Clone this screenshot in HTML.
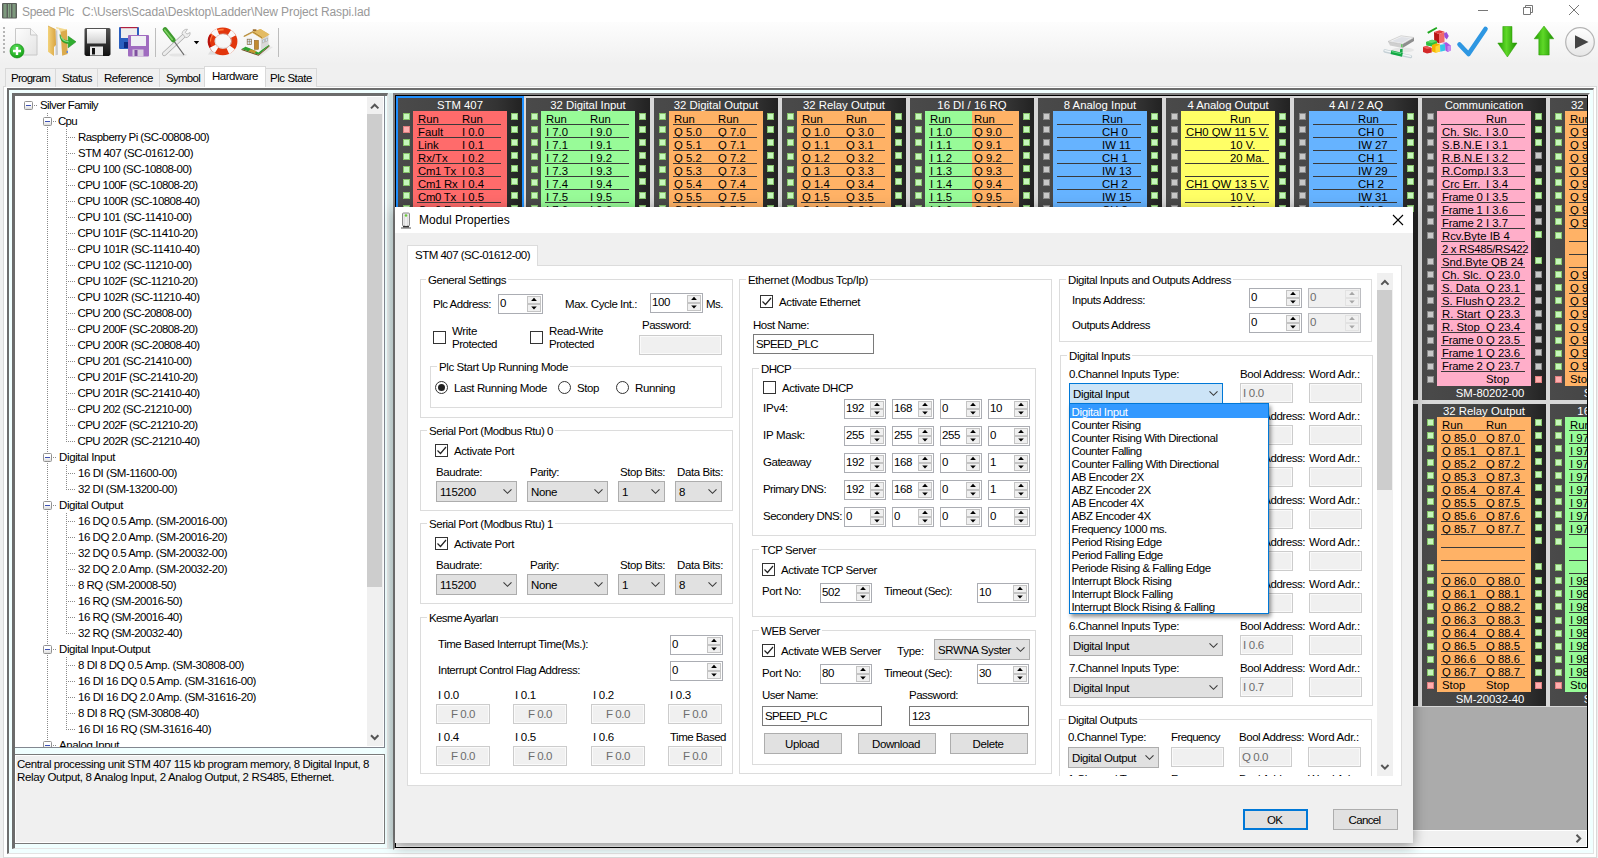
<!DOCTYPE html>
<html><head><meta charset="utf-8"><title>Speed Plc</title>
<style>
html,body{margin:0;padding:0;}
body{width:1598px;height:858px;overflow:hidden;background:#f0f0f0;position:relative;font-family:"Liberation Sans",sans-serif;font-size:11px;color:#000;}
div,span,svg{position:absolute;box-sizing:border-box;}
.t{white-space:pre;line-height:16px;height:16px;font-size:11.5px;letter-spacing:-0.4px;}
.m{white-space:pre;line-height:13px;height:13px;font-size:11.33px;letter-spacing:0px;margin-top:1px;}
.mh{white-space:pre;line-height:14px;height:14px;font-size:11.33px;color:#fff;text-align:center;}
.g{color:#6d6d6d;}
.gb{border:1px solid #dcdcdc;}
.gt{background:#fff;padding:0 2px;}
.sp{background:#fff;border:1px solid #7a7a7a;}
.tb{background:#fff;border:1px solid #7a7a7a;}
.tbd{background:#f0f0f0;border:1px solid #cccccc;box-shadow:inset 0 0 0 1px #fafafa;}
.cb{background:#fff;border:1px solid #333;}
.rb{background:#fff;border:1px solid #333;border-radius:50%;}
.co{background:#e1e1e1;border:1px solid #adadad;}
.bt{background:#e1e1e1;border:1px solid #adadad;text-align:center;}
.led{width:7px;height:7px;border:1px solid;}
.lg{background:#c6f7bc;border-color:#86c46a;}
.lx{background:#c8c8c8;border-color:#8a8a8a;}
.lr{background:#ffaeae;border-color:#e08080;}
.ul{height:1px;background:#3a3a3a;}
</style></head>
<body>
<div style="left:0px;top:0px;width:1598px;height:22px;background:#fff;"></div>
<svg style="left:1.5px;top:3px" width="15" height="15.5" viewBox="0 0 15 15" preserveAspectRatio="none"><rect x="0" y="0" width="15" height="15" rx="1" fill="#5a5f5a"/><rect x="1.6" y="1" width="2.8" height="13" fill="#8fae8f"/><rect x="6.1" y="1" width="2.8" height="13" fill="#8fae8f"/><rect x="10.6" y="1" width="2.8" height="13" fill="#8fae8f"/><rect x="2.6" y="1" width=".8" height="13" fill="#5f7a5f"/><rect x="7.1" y="1" width=".8" height="13" fill="#5f7a5f"/><rect x="11.6" y="1" width=".8" height="13" fill="#5f7a5f"/></svg>
<span class="t" style="left:22px;top:3px;font-size:12px;letter-spacing:-0.300px;color:#999;line-height:18px;height:18px;">Speed Plc</span>
<span class="t" style="left:82px;top:3px;font-size:12px;letter-spacing:-0.107px;color:#999;line-height:18px;height:18px;">C:\Users\Scada\Desktop\Ladder\New Project Raspi.lad</span>
<svg style="left:1470px;top:0" width="128" height="22" viewBox="0 0 128 22"><path d="M8 10.5h10" stroke="#777" stroke-width="1" fill="none"/><path d="M53.5 7.5h7v7h-7z M55.5 7.5v-2h7v7h-2" stroke="#777" stroke-width="1" fill="none"/><path d="M99 5l10 10M109 5l-10 10" stroke="#777" stroke-width="1" fill="none"/></svg>
<div style="left:0px;top:22px;width:1598px;height:42px;background:linear-gradient(#fdfdfd,#f0f0f0);"></div>
<svg style="left:3px;top:27px" width="3" height="26"><g fill="#b5b5b5"><rect x="0" y="0" width="2" height="2"/><rect x="0" y="4" width="2" height="2"/><rect x="0" y="8" width="2" height="2"/><rect x="0" y="12" width="2" height="2"/><rect x="0" y="16" width="2" height="2"/><rect x="0" y="20" width="2" height="2"/><rect x="0" y="24" width="2" height="2"/></g></svg>
<svg style="left:0;top:22px" width="1598" height="42" viewBox="0 22 1598 42">
<defs>
<linearGradient id="gpage" x1="0" y1="0" x2="1" y2="1"><stop offset="0" stop-color="#fdfdfd"/><stop offset="1" stop-color="#e4e4e4"/></linearGradient>
<radialGradient id="ggrn" cx=".4" cy=".3" r=".8"><stop offset="0" stop-color="#5fe05f"/><stop offset="1" stop-color="#0a9a0a"/></radialGradient>
<linearGradient id="gfold" x1="0" y1="0" x2="1" y2="0"><stop offset="0" stop-color="#f3d27a"/><stop offset="1" stop-color="#d9a441"/></linearGradient>
<linearGradient id="garr" x1="0" y1="0" x2="1" y2="0"><stop offset="0" stop-color="#1f9c00"/><stop offset=".45" stop-color="#5fd828"/><stop offset="1" stop-color="#1c9000"/></linearGradient>
<linearGradient id="gblk" x1="0" y1="0" x2="0" y2="1"><stop offset="0" stop-color="#555"/><stop offset="1" stop-color="#111"/></linearGradient>
<linearGradient id="glab" x1="0" y1="0" x2="0" y2="1"><stop offset="0" stop-color="#fff"/><stop offset="1" stop-color="#cfcfcf"/></linearGradient>
<linearGradient id="gplay" x1="0" y1="0" x2="0" y2="1"><stop offset="0" stop-color="#fff"/><stop offset="1" stop-color="#e6e6e6"/></linearGradient>
<linearGradient id="gdrv" x1="0" y1="0" x2="0" y2="1"><stop offset="0" stop-color="#f2f2f2"/><stop offset="1" stop-color="#a9a9a9"/></linearGradient>
</defs>
<path d="M15.5 28.5h15l6.5 6.5v20h-21.5z" fill="url(#gpage)" stroke="#c8c8c8"/><path d="M30.5 28.5v6.5h6.5" fill="#f4f4f4" stroke="#c8c8c8"/>
<circle cx="17" cy="51" r="7" fill="url(#ggrn)" stroke="#0b8a0b" stroke-width=".6"/><path d="M13 51h8M17 47v8" stroke="#fff" stroke-width="2.4"/>
<path d="M56 27l10.5 2.5v3l-8 1z" fill="#f3d98f"/>
<path d="M55.5 29l3-.6 2.5 4.6 1 21-7 1z" fill="#f4f4f4"/><path d="M55.5 30.5l1.8-.3.7 24.5-2.5.6z" fill="#c9c9c9"/>
<path d="M48 26l7.5 3.5.5 15.5-2 2v9l-6-4.2z" fill="url(#gfold)"/><path d="M48 26l7.5 3.5" stroke="#c9952e" stroke-width=".6" fill="none"/>
<path d="M60.5 31.5l6.5-2 .6 24.5-5.4 1.8z" fill="#dcab4c"/><path d="M60.5 31.5l6.5-2" stroke="#f3d98f" stroke-width=".7"/>
<rect x="66.6" y="50.8" width="1.2" height="2.2" fill="#3a7bff"/>
<path d="M60 34.5c1 4 4 6.2 8.2 6.3v-4.6l7.8 5.6-7.8 6v-4.3c-5.5 0-8.4-4-8.2-9z" fill="#2fae2f" stroke="#168016" stroke-width=".5"/><path d="M61 36.5c1.2 3 3.6 5 7.6 5.2" stroke="#8be28b" stroke-width="1.1" fill="none"/>
<path d="M84.5 29.5a1.5 1.5 0 0 1 1.5-1.5h23a1.5 1.5 0 0 1 1.5 1.5v25l-1.5 1.5h-23l-1.5-1.5z" fill="url(#gblk)"/><rect x="87" y="29" width="19" height="14.5" fill="url(#glab)"/><rect x="90" y="46.5" width="13" height="9" fill="#e9e9e9"/><rect x="92" y="48" width="3" height="6.5" fill="#111"/>
<rect x="119" y="27" width="20" height="22" rx="1" fill="#2a5fc0"/><rect x="121" y="28" width="16" height="10" fill="#eee"/><rect x="120.5" y="27" width="17" height="1.2" fill="#b02040"/><rect x="124" y="42" width="5" height="6" fill="#0c2a80"/>
<rect x="128" y="35" width="21" height="21.5" rx="1" fill="#a06cc0"/><rect x="131" y="36" width="15" height="10" fill="#f0f0f4"/><rect x="132.5" y="49.5" width="11" height="7" fill="#d9d0e0"/><rect x="134.5" y="50" width="3" height="6" fill="#8050a0"/>
<rect x="155" y="28" width="1" height="29" fill="#bdbdbd"/>
<ellipse cx="178" cy="55" rx="9" ry="1.6" fill="#e4e4e4"/>
<path d="M164.2 53.8l20-18.5" stroke="#a9a9a9" stroke-width="4.4" stroke-linecap="round"/><path d="M164.2 53.8l20-18.5" stroke="#ececec" stroke-width="3" stroke-linecap="round"/>
<path d="M182 33.5c.5-3 3-4.6 5.5-4.2l-2.2 3 1.6 1.8 3.2-1.6c.4 2.6-1.4 5-4.3 5.2z" fill="#efefef" stroke="#9c9c9c" stroke-width=".6"/>
<path d="M173.6 40.6l10.2 14" stroke="#6a6a6a" stroke-width="1.1" stroke-linecap="round"/>
<path d="M165 29.6l8.3 10.3" stroke="#3f9a2f" stroke-width="4.8" stroke-linecap="round"/><path d="M164.7 30l7.6 9.4" stroke="#7fd264" stroke-width="1.6" stroke-linecap="round"/>
<path d="M193.8 41h5.4l-2.7 3.2z" fill="#000"/>
<path d="M208 54.5l6-9 6 9.5z" fill="#dedede"/>
<ellipse cx="222.8" cy="41.4" rx="11.4" ry="10.6" fill="none" stroke="#e2360c" stroke-width="6.4"/>
<ellipse cx="222.8" cy="41.4" rx="12.6" ry="11.8" fill="none" stroke="#ff7a3c" stroke-width="1.6" stroke-dasharray="20 57" stroke-dashoffset="-38"/>
<path d="M210.6 35a13 12 0 0 0 4.5 16.5" stroke="#b8120c" stroke-width="2.2" fill="none"/>
<ellipse cx="222.8" cy="41.4" rx="11.4" ry="10.6" fill="none" stroke="#f8f8f8" stroke-width="6.6" stroke-dasharray="5.6 11.7" stroke-dashoffset="-6.4"/>
<ellipse cx="223.4" cy="41" rx="8.3" ry="7.2" fill="none" stroke="#c8c8c8" stroke-width=".6"/>
<path d="M258 55l12-8.5 3 .5-12 9z" fill="#e6e6e6"/>
<path d="M241.5 49l4.5-2.5 12.5 6 10-8 1 1-11 9.3z" fill="#2ea22e"/><path d="M241.5 49l17 5.8 11-9.3v.9l-11 9.4-17-5.9z" fill="#6b4a1a"/>
<path d="M246 36.5l6.5-4 8.3 5v12.6l-14.8-3.1z" fill="#f6f6f6"/>
<path d="M260.8 37.5l7.7-2.5v10.3l-7.7 4.8z" fill="#d9d9d9"/>
<path d="M243.7 36.3l8.8-4.6 8-2.7 9 5.5-7.5 4.2-9.5-5.8-8 4.2z" fill="#dcb055"/><path d="M252.5 32.8l8-3.8 9 5.5-7.5 4.2z" fill="#e3bb63"/><path d="M243.7 36.3l8.8-4.6 9.5 6" stroke="#9c7226" stroke-width=".8" fill="none"/>
<rect x="252.8" y="29.3" width="3.6" height="1.8" fill="#9a6a2a"/>
<rect x="254.3" y="40.3" width="4.2" height="9" fill="#c08a30" stroke="#8a5a1a" stroke-width=".5"/>
<rect x="247.2" y="39.2" width="4.4" height="5.2" fill="#d5e6f7" stroke="#8a6a3a" stroke-width=".7"/><path d="M249.4 39.2v5.2M247.2 41.6h4.4" stroke="#8a6a3a" stroke-width=".5"/>
<path d="M262.5 40l2-.8v3l-2 .9zM265.5 38.8l2-.8v3l-2 .9z" fill="#cfe2f5" stroke="#8a7a5a" stroke-width=".3"/>
<path d="M250.5 49.3l6 1.8-2 2.2-6-2z" fill="#c9962e"/>
<rect x="278" y="28" width="1" height="29" fill="#bdbdbd"/>
<ellipse cx="1403" cy="50" rx="11" ry="2.5" fill="#e6e6e6"/>
<path d="M1388 41.5l14.5 2.5v4l-12.5-2.5z" fill="#cfcfcf"/><path d="M1402.5 44l11.5-6.5v3.5l-11.5 7z" fill="#8e8e8e"/><path d="M1388 41.5l13-5.75 13 1.75-11.5 6.5z" fill="#f2f2f2" stroke="#b5b5b5" stroke-width=".5"/><path d="M1391.5 41.2l9.8-4.3 9.4 1.2-8.7 4.8z" fill="#dfe1e6"/>
<rect x="1401.4" y="44.2" width=".9" height="3" fill="#22c022"/>
<path d="M1385 51l25.5 5.6" stroke="#c5d0d5" stroke-width="3.4" stroke-linecap="round"/><path d="M1385 50.6l25.5 5.6" stroke="#f2f6f8" stroke-width="1.4" stroke-linecap="round"/>
<path d="M1391 52.2l11.4 2.6" stroke="#12a844" stroke-width="3.8"/><path d="M1400 49.2l2.6-.4v4l-2.6-.6z" fill="#12a844"/><path d="M1392 51.6l9 2" stroke="#6fe090" stroke-width=".9"/>
<path d="M1427.2 32l9.3-5 .8 1.5-9 5.2z" fill="#1fa81f"/>
<path d="M1434 32l5 2v9.5l-4.8-3z" fill="#b81414"/><path d="M1434 32l5.5-1.75 5 1.5-5.5 2.25z" fill="#e23a3a"/><path d="M1439 34l5.5-2.25v10.25l-5.5 1.5z" fill="#f06a6a"/>
<path d="M1444 33.5l2.5-1.5 2.25 4-2 3.5-2.25-2.5z" fill="#9a50d8"/>
<path d="M1426 42l6-2.25 5 1.25v3l-5 2.5-5.75-1z" fill="#2fbf3f"/><path d="M1426 42l6-2.25 5 1.25-5 2z" fill="#63dc6c"/>
<path d="M1423 47l3.5-1 5.25 2v4.5l-4.75 1-4-1.5z" fill="#d42828"/><path d="M1423 47l3.500-1 5.25 2-4.75 1z" fill="#ee5a5a"/>
<path d="M1432 45l4.5-1.75 3.5 1.25v7l-4.5 1.25-3.500-1.250z" fill="#f6b400"/><path d="M1435.500 46.500l4.5-2v7l-4.5 1.250z" fill="#ffd83a"/>
<path d="M1440 44.750l5-.75.500 6.500-5.250 1.250z" fill="#35c6e8"/>
<path d="M1442 43l4.500-.75 4.250 3.250v5l-3.250 1.500-2-1.500-.500-6.500z" fill="#a855e0"/><path d="M1447.500 46l3.250-.5v5l-3.250 1.500z" fill="#c98af0"/>
<path d="M1459.5 44.5l9 9.5 17-25" stroke="#2e97e2" stroke-width="4.6" fill="none" stroke-linecap="round" stroke-linejoin="round"/>
<path d="M1502.8 26.5h9.2v16.5h5l-9.6 14-9.6-14h5z" fill="url(#garr)" stroke="#2a9a00" stroke-width=".5"/>
<path d="M1544 26l9.8 12.8h-4.6v16.2h-10.4v-16.2h-4.6z" fill="url(#garr)" stroke="#2a9a00" stroke-width=".5"/>
<circle cx="1580" cy="42" r="14.3" fill="url(#gplay)" stroke="#b4b4b4" stroke-width="1.2"/><path d="M1575 35.3l13.5 6.7-13.5 6.7z" fill="#444"/>
</svg>
<div style="left:3px;top:86px;width:1594px;height:772px;background:#fff;border:1px solid #d9d9d9;"></div>
<div style="left:5px;top:68px;width:51px;height:19px;background:#f0f0f0;border:1px solid #d9d9d9;border-bottom:none;"></div>
<span class="t" style="left:11px;top:70px;letter-spacing:-0.730px;">Program</span>
<div style="left:55px;top:68px;width:43px;height:19px;background:#f0f0f0;border:1px solid #d9d9d9;border-bottom:none;"></div>
<span class="t" style="left:62px;top:70px;letter-spacing:-0.435px;">Status</span>
<div style="left:97px;top:68px;width:63px;height:19px;background:#f0f0f0;border:1px solid #d9d9d9;border-bottom:none;"></div>
<span class="t" style="left:104px;top:70px;letter-spacing:-0.451px;">Reference</span>
<div style="left:159px;top:68px;width:46px;height:19px;background:#f0f0f0;border:1px solid #d9d9d9;border-bottom:none;"></div>
<span class="t" style="left:166px;top:70px;letter-spacing:-0.727px;">Symbol</span>
<div style="left:204px;top:66px;width:62px;height:21px;background:#fff;border:1px solid #d9d9d9;border-bottom:none;"></div>
<span class="t" style="left:212px;top:68px;letter-spacing:-0.482px;">Hardware</span>
<div style="left:265px;top:68px;width:52px;height:19px;background:#f0f0f0;border:1px solid #d9d9d9;border-bottom:none;"></div>
<span class="t" style="left:270px;top:70px;letter-spacing:-0.448px;">Plc State</span>
<div style="left:7px;top:88px;width:1587px;height:766px;background:#f0ffff;border:2px solid #6e6e6e;border-right:1px solid #e3e3e3;border-bottom:1px solid #e3e3e3;"></div>
<div style="left:12px;top:93px;width:376px;height:756px;background:#f0ffff;border:3px solid #6c6c6c;border-right:1px solid #e6e6e6;border-bottom:1px solid #e6e6e6;"></div>
<div style="left:15px;top:96px;width:370px;height:652px;background:#fff;border-right:1px solid #828790;border-bottom:1px solid #828790;"></div>
<div style="left:15px;top:96px;width:352px;height:651px;overflow:hidden;">
<div style="left:32px;top:17px;height:641px;background:repeating-linear-gradient(180deg,#8a8a8a 0 1px,transparent 1px 2px);width:1px;"></div>
<div style="left:51px;top:33px;height:313px;background:repeating-linear-gradient(180deg,#8a8a8a 0 1px,transparent 1px 2px);width:1px;"></div>
<div style="left:51px;top:369px;height:25px;background:repeating-linear-gradient(180deg,#8a8a8a 0 1px,transparent 1px 2px);width:1px;"></div>
<div style="left:51px;top:417px;height:121px;background:repeating-linear-gradient(180deg,#8a8a8a 0 1px,transparent 1px 2px);width:1px;"></div>
<div style="left:51px;top:561px;height:73px;background:repeating-linear-gradient(180deg,#8a8a8a 0 1px,transparent 1px 2px);width:1px;"></div>
<span class="t" style="left:25px;top:1px;letter-spacing:-0.601px;">Silver Family</span>
<div style="left:9px;top:5px;width:9px;height:9px;border:1px solid #919191;background:linear-gradient(#fff 40%,#dcdcdc);border-radius:1.5px;"></div>
<div style="left:11px;top:9px;width:5px;height:1px;background:#3c50b4;"></div>
<div style="left:19px;top:9px;width:3px;background:repeating-linear-gradient(90deg,#8a8a8a 0 1px,transparent 1px 2px);height:1px;"></div>
<span class="t" style="left:43px;top:17px;letter-spacing:-0.703px;">Cpu</span>
<div style="left:28px;top:21px;width:9px;height:9px;border:1px solid #919191;background:linear-gradient(#fff 40%,#dcdcdc);border-radius:1.5px;"></div>
<div style="left:30px;top:25px;width:5px;height:1px;background:#3c50b4;"></div>
<div style="left:38px;top:25px;width:3px;background:repeating-linear-gradient(90deg,#8a8a8a 0 1px,transparent 1px 2px);height:1px;"></div>
<span class="t" style="left:63px;top:33px;letter-spacing:-0.567px;">Raspberry Pi (SC-00808-00)</span>
<div style="left:53px;top:41px;width:7px;background:repeating-linear-gradient(90deg,#8a8a8a 0 1px,transparent 1px 2px);height:1px;"></div>
<span class="t" style="left:63px;top:49px;letter-spacing:-0.520px;">STM 407 (SC-01612-00)</span>
<div style="left:53px;top:57px;width:7px;background:repeating-linear-gradient(90deg,#8a8a8a 0 1px,transparent 1px 2px);height:1px;"></div>
<span class="t" style="left:62.5px;top:65px;letter-spacing:-0.568px;">CPU 100 (SC-10808-00)</span>
<div style="left:53px;top:73px;width:7px;background:repeating-linear-gradient(90deg,#8a8a8a 0 1px,transparent 1px 2px);height:1px;"></div>
<span class="t" style="left:62.5px;top:81px;letter-spacing:-0.589px;">CPU 100F (SC-10808-20)</span>
<div style="left:53px;top:89px;width:7px;background:repeating-linear-gradient(90deg,#8a8a8a 0 1px,transparent 1px 2px);height:1px;"></div>
<span class="t" style="left:62.5px;top:97px;letter-spacing:-0.556px;">CPU 100R (SC-10808-40)</span>
<div style="left:53px;top:105px;width:7px;background:repeating-linear-gradient(90deg,#8a8a8a 0 1px,transparent 1px 2px);height:1px;"></div>
<span class="t" style="left:62.5px;top:113px;letter-spacing:-0.528px;">CPU 101 (SC-11410-00)</span>
<div style="left:53px;top:121px;width:7px;background:repeating-linear-gradient(90deg,#8a8a8a 0 1px,transparent 1px 2px);height:1px;"></div>
<span class="t" style="left:62.5px;top:129px;letter-spacing:-0.550px;">CPU 101F (SC-11410-20)</span>
<div style="left:53px;top:137px;width:7px;background:repeating-linear-gradient(90deg,#8a8a8a 0 1px,transparent 1px 2px);height:1px;"></div>
<span class="t" style="left:62.5px;top:145px;letter-spacing:-0.517px;">CPU 101R (SC-11410-40)</span>
<div style="left:53px;top:153px;width:7px;background:repeating-linear-gradient(90deg,#8a8a8a 0 1px,transparent 1px 2px);height:1px;"></div>
<span class="t" style="left:62.5px;top:161px;letter-spacing:-0.528px;">CPU 102 (SC-11210-00)</span>
<div style="left:53px;top:169px;width:7px;background:repeating-linear-gradient(90deg,#8a8a8a 0 1px,transparent 1px 2px);height:1px;"></div>
<span class="t" style="left:62.5px;top:177px;letter-spacing:-0.550px;">CPU 102F (SC-11210-20)</span>
<div style="left:53px;top:185px;width:7px;background:repeating-linear-gradient(90deg,#8a8a8a 0 1px,transparent 1px 2px);height:1px;"></div>
<span class="t" style="left:62.5px;top:193px;letter-spacing:-0.517px;">CPU 102R (SC-11210-40)</span>
<div style="left:53px;top:201px;width:7px;background:repeating-linear-gradient(90deg,#8a8a8a 0 1px,transparent 1px 2px);height:1px;"></div>
<span class="t" style="left:62.5px;top:209px;letter-spacing:-0.568px;">CPU 200 (SC-20808-00)</span>
<div style="left:53px;top:217px;width:7px;background:repeating-linear-gradient(90deg,#8a8a8a 0 1px,transparent 1px 2px);height:1px;"></div>
<span class="t" style="left:62.5px;top:225px;letter-spacing:-0.589px;">CPU 200F (SC-20808-20)</span>
<div style="left:53px;top:233px;width:7px;background:repeating-linear-gradient(90deg,#8a8a8a 0 1px,transparent 1px 2px);height:1px;"></div>
<span class="t" style="left:62.5px;top:241px;letter-spacing:-0.556px;">CPU 200R (SC-20808-40)</span>
<div style="left:53px;top:249px;width:7px;background:repeating-linear-gradient(90deg,#8a8a8a 0 1px,transparent 1px 2px);height:1px;"></div>
<span class="t" style="left:62.5px;top:257px;letter-spacing:-0.568px;">CPU 201 (SC-21410-00)</span>
<div style="left:53px;top:265px;width:7px;background:repeating-linear-gradient(90deg,#8a8a8a 0 1px,transparent 1px 2px);height:1px;"></div>
<span class="t" style="left:62.5px;top:273px;letter-spacing:-0.589px;">CPU 201F (SC-21410-20)</span>
<div style="left:53px;top:281px;width:7px;background:repeating-linear-gradient(90deg,#8a8a8a 0 1px,transparent 1px 2px);height:1px;"></div>
<span class="t" style="left:62.5px;top:289px;letter-spacing:-0.556px;">CPU 201R (SC-21410-40)</span>
<div style="left:53px;top:297px;width:7px;background:repeating-linear-gradient(90deg,#8a8a8a 0 1px,transparent 1px 2px);height:1px;"></div>
<span class="t" style="left:62.5px;top:305px;letter-spacing:-0.568px;">CPU 202 (SC-21210-00)</span>
<div style="left:53px;top:313px;width:7px;background:repeating-linear-gradient(90deg,#8a8a8a 0 1px,transparent 1px 2px);height:1px;"></div>
<span class="t" style="left:62.5px;top:321px;letter-spacing:-0.589px;">CPU 202F (SC-21210-20)</span>
<div style="left:53px;top:329px;width:7px;background:repeating-linear-gradient(90deg,#8a8a8a 0 1px,transparent 1px 2px);height:1px;"></div>
<span class="t" style="left:62.5px;top:337px;letter-spacing:-0.556px;">CPU 202R (SC-21210-40)</span>
<div style="left:53px;top:345px;width:7px;background:repeating-linear-gradient(90deg,#8a8a8a 0 1px,transparent 1px 2px);height:1px;"></div>
<span class="t" style="left:44px;top:353px;letter-spacing:-0.364px;">Digital Input</span>
<div style="left:28px;top:357px;width:9px;height:9px;border:1px solid #919191;background:linear-gradient(#fff 40%,#dcdcdc);border-radius:1.5px;"></div>
<div style="left:30px;top:361px;width:5px;height:1px;background:#3c50b4;"></div>
<div style="left:38px;top:361px;width:3px;background:repeating-linear-gradient(90deg,#8a8a8a 0 1px,transparent 1px 2px);height:1px;"></div>
<span class="t" style="left:63px;top:369px;letter-spacing:-0.430px;">16 DI (SM-11600-00)</span>
<div style="left:53px;top:377px;width:7px;background:repeating-linear-gradient(90deg,#8a8a8a 0 1px,transparent 1px 2px);height:1px;"></div>
<span class="t" style="left:63px;top:385px;letter-spacing:-0.475px;">32 DI (SM-13200-00)</span>
<div style="left:53px;top:393px;width:7px;background:repeating-linear-gradient(90deg,#8a8a8a 0 1px,transparent 1px 2px);height:1px;"></div>
<span class="t" style="left:44px;top:401px;letter-spacing:-0.406px;">Digital Output</span>
<div style="left:28px;top:405px;width:9px;height:9px;border:1px solid #919191;background:linear-gradient(#fff 40%,#dcdcdc);border-radius:1.5px;"></div>
<div style="left:30px;top:409px;width:5px;height:1px;background:#3c50b4;"></div>
<div style="left:38px;top:409px;width:3px;background:repeating-linear-gradient(90deg,#8a8a8a 0 1px,transparent 1px 2px);height:1px;"></div>
<span class="t" style="left:63px;top:417px;letter-spacing:-0.477px;">16 DQ 0.5 Amp. (SM-20016-00)</span>
<div style="left:53px;top:425px;width:7px;background:repeating-linear-gradient(90deg,#8a8a8a 0 1px,transparent 1px 2px);height:1px;"></div>
<span class="t" style="left:63px;top:433px;letter-spacing:-0.477px;">16 DQ 2.0 Amp. (SM-20016-20)</span>
<div style="left:53px;top:441px;width:7px;background:repeating-linear-gradient(90deg,#8a8a8a 0 1px,transparent 1px 2px);height:1px;"></div>
<span class="t" style="left:63px;top:449px;letter-spacing:-0.477px;">32 DQ 0.5 Amp. (SM-20032-00)</span>
<div style="left:53px;top:457px;width:7px;background:repeating-linear-gradient(90deg,#8a8a8a 0 1px,transparent 1px 2px);height:1px;"></div>
<span class="t" style="left:63px;top:465px;letter-spacing:-0.477px;">32 DQ 2.0 Amp. (SM-20032-20)</span>
<div style="left:53px;top:473px;width:7px;background:repeating-linear-gradient(90deg,#8a8a8a 0 1px,transparent 1px 2px);height:1px;"></div>
<span class="t" style="left:63px;top:481px;letter-spacing:-0.521px;">8 RQ (SM-20008-50)</span>
<div style="left:53px;top:489px;width:7px;background:repeating-linear-gradient(90deg,#8a8a8a 0 1px,transparent 1px 2px);height:1px;"></div>
<span class="t" style="left:63px;top:497px;letter-spacing:-0.515px;">16 RQ (SM-20016-50)</span>
<div style="left:53px;top:505px;width:7px;background:repeating-linear-gradient(90deg,#8a8a8a 0 1px,transparent 1px 2px);height:1px;"></div>
<span class="t" style="left:63px;top:513px;letter-spacing:-0.515px;">16 RQ (SM-20016-40)</span>
<div style="left:53px;top:521px;width:7px;background:repeating-linear-gradient(90deg,#8a8a8a 0 1px,transparent 1px 2px);height:1px;"></div>
<span class="t" style="left:63px;top:529px;letter-spacing:-0.515px;">32 RQ (SM-20032-40)</span>
<div style="left:53px;top:537px;width:7px;background:repeating-linear-gradient(90deg,#8a8a8a 0 1px,transparent 1px 2px);height:1px;"></div>
<span class="t" style="left:44px;top:545px;letter-spacing:-0.405px;">Digital Input-Output</span>
<div style="left:28px;top:549px;width:9px;height:9px;border:1px solid #919191;background:linear-gradient(#fff 40%,#dcdcdc);border-radius:1.5px;"></div>
<div style="left:30px;top:553px;width:5px;height:1px;background:#3c50b4;"></div>
<div style="left:38px;top:553px;width:3px;background:repeating-linear-gradient(90deg,#8a8a8a 0 1px,transparent 1px 2px);height:1px;"></div>
<span class="t" style="left:63px;top:561px;letter-spacing:-0.445px;">8 DI 8 DQ 0.5 Amp. (SM-30808-00)</span>
<div style="left:53px;top:569px;width:7px;background:repeating-linear-gradient(90deg,#8a8a8a 0 1px,transparent 1px 2px);height:1px;"></div>
<span class="t" style="left:63px;top:577px;letter-spacing:-0.443px;">16 DI 16 DQ 0.5 Amp. (SM-31616-00)</span>
<div style="left:53px;top:585px;width:7px;background:repeating-linear-gradient(90deg,#8a8a8a 0 1px,transparent 1px 2px);height:1px;"></div>
<span class="t" style="left:63px;top:593px;letter-spacing:-0.443px;">16 DI 16 DQ 2.0 Amp. (SM-31616-20)</span>
<div style="left:53px;top:601px;width:7px;background:repeating-linear-gradient(90deg,#8a8a8a 0 1px,transparent 1px 2px);height:1px;"></div>
<span class="t" style="left:63px;top:609px;letter-spacing:-0.464px;">8 DI 8 RQ (SM-30808-40)</span>
<div style="left:53px;top:617px;width:7px;background:repeating-linear-gradient(90deg,#8a8a8a 0 1px,transparent 1px 2px);height:1px;"></div>
<span class="t" style="left:63px;top:625px;letter-spacing:-0.458px;">16 DI 16 RQ (SM-31616-40)</span>
<div style="left:53px;top:633px;width:7px;background:repeating-linear-gradient(90deg,#8a8a8a 0 1px,transparent 1px 2px);height:1px;"></div>
<span class="t" style="left:44px;top:641px;letter-spacing:-0.383px;">Analog Input</span>
<div style="left:28px;top:645px;width:9px;height:9px;border:1px solid #919191;background:linear-gradient(#fff 40%,#dcdcdc);border-radius:1.5px;"></div>
<div style="left:30px;top:649px;width:5px;height:1px;background:#3c50b4;"></div>
<div style="left:38px;top:649px;width:3px;background:repeating-linear-gradient(90deg,#8a8a8a 0 1px,transparent 1px 2px);height:1px;"></div>
</div>
<div style="left:367px;top:97px;width:16px;height:649px;background:#f0f0f0;"></div>
<div style="left:367px;top:114px;width:15px;height:473px;background:#cdcdcd;"></div>
<svg style="left:367px;top:97px" width="16" height="649"><path d="M4 11.4l3.7-3.7 3.7 3.7" stroke="#555" stroke-width="2" fill="none"/><path d="M4 638.3l3.7 3.7 3.7-3.7" stroke="#555" stroke-width="2" fill="none"/></svg>
<div style="left:15px;top:754px;width:370px;height:90px;background:#f0f0f0;border:1px solid #7a7a7a;border-left:none;box-shadow:inset -1px -1px 0 0 #fff, inset 1px 1px 0 0 #fff;"></div>
<span class="t" style="left:17px;top:755.5px;letter-spacing:-0.435px;">Central processing unit STM 407 115 kb program memory, 8 Digital Input, 8</span>
<span class="t" style="left:17px;top:768.5px;letter-spacing:-0.356px;">Relay Output, 8 Analog Input, 2 Analog Output, 2 RS485, Ethernet.</span>
<div style="left:388px;top:93px;width:5px;height:756px;background:linear-gradient(90deg,#e4e8e8,#d3e3e3 40%,#d8e6e6);"></div>
<div style="left:393px;top:93px;width:1197px;height:757px;background:#fff;border:2px solid #808080;border-right-color:#fff;border-bottom-color:#fff;"></div>
<div style="left:395px;top:95px;width:1193px;height:753px;background:#ababab;border:1px solid #000;overflow:hidden;"><div style="left:0;top:0;width:1192px;height:611px;background:#d8d8d8;"></div>
<div style="left:0px;top:0px;width:128px;height:308px;background:#1e90ff;"></div>
<div style="left:2px;top:2px;width:124px;height:302px;background:linear-gradient(90deg,#4a4a4a,#444 45%,#333 80%,#222);"></div>
<span class="mh" style="left:2px;top:2px;width:124px;">STM 407</span>
<span class="mh" style="left:8px;top:290px;width:124px;">SC-01612-00</span>
<div style="left:17px;top:15px;width:94px;height:275px;background:#ff6b6b;"></div>
<span class="m" style="left:22px;top:16px;">Run</span>
<span class="m" style="left:66px;top:16px;">Run</span>
<div class="ul" style="left:21px;top:28px;width:84px;"></div>
<span class="m" style="left:22px;top:29px;">Fault</span>
<span class="m" style="left:66px;top:29px;">I 0.0</span>
<div class="ul" style="left:21px;top:41px;width:84px;"></div>
<span class="m" style="left:22px;top:42px;">Link</span>
<span class="m" style="left:66px;top:42px;">I 0.1</span>
<div class="ul" style="left:21px;top:54px;width:84px;"></div>
<span class="m" style="left:22px;top:55px;">Rx/Tx</span>
<span class="m" style="left:66px;top:55px;">I 0.2</span>
<div class="ul" style="left:21px;top:67px;width:84px;"></div>
<span class="m" style="left:22px;top:68px;letter-spacing:-0.25px;">Cm1 Tx</span>
<span class="m" style="left:66px;top:68px;">I 0.3</span>
<div class="ul" style="left:21px;top:80px;width:84px;"></div>
<span class="m" style="left:22px;top:81px;letter-spacing:-0.25px;">Cm1 Rx</span>
<span class="m" style="left:66px;top:81px;">I 0.4</span>
<div class="ul" style="left:21px;top:93px;width:84px;"></div>
<span class="m" style="left:22px;top:94px;letter-spacing:-0.25px;">Cm0 Tx</span>
<span class="m" style="left:66px;top:94px;">I 0.5</span>
<div class="ul" style="left:21px;top:106px;width:84px;"></div>
<span class="m" style="left:22px;top:107px;letter-spacing:-0.25px;">Cm0 Rx</span>
<span class="m" style="left:66px;top:107px;">I 0.6</span>
<div class="ul" style="left:21px;top:119px;width:84px;"></div>
<div class="led lg" style="left:7px;top:17px;"></div>
<div class="led lr" style="left:7px;top:30px;"></div>
<div class="led lg" style="left:7px;top:43px;"></div>
<div class="led lg" style="left:7px;top:57px;"></div>
<div class="led lg" style="left:7px;top:70px;"></div>
<div class="led lg" style="left:7px;top:83px;"></div>
<div class="led lg" style="left:7px;top:96px;"></div>
<div class="led lg" style="left:7px;top:109px;"></div>
<div class="led lg" style="left:115px;top:17px;"></div>
<div class="led lg" style="left:115px;top:30px;"></div>
<div class="led lg" style="left:115px;top:43px;"></div>
<div class="led lg" style="left:115px;top:56px;"></div>
<div class="led lg" style="left:115px;top:69px;"></div>
<div class="led lg" style="left:115px;top:82px;"></div>
<div class="led lg" style="left:115px;top:96px;"></div>
<div class="led lg" style="left:115px;top:109px;"></div>
<div style="left:130px;top:2px;width:124px;height:302px;background:linear-gradient(90deg,#4a4a4a,#444 45%,#333 80%,#222);"></div>
<span class="mh" style="left:130px;top:2px;width:124px;">32 Digital Input</span>
<span class="mh" style="left:136px;top:290px;width:124px;">SM-13200-00</span>
<div style="left:145px;top:15px;width:94px;height:275px;background:#98fb98;"></div>
<span class="m" style="left:150px;top:16px;">Run</span>
<span class="m" style="left:194px;top:16px;">Run</span>
<div class="ul" style="left:149px;top:28px;width:84px;"></div>
<span class="m" style="left:150px;top:29px;">I 7.0</span>
<span class="m" style="left:194px;top:29px;">I 9.0</span>
<div class="ul" style="left:149px;top:41px;width:84px;"></div>
<span class="m" style="left:150px;top:42px;">I 7.1</span>
<span class="m" style="left:194px;top:42px;">I 9.1</span>
<div class="ul" style="left:149px;top:54px;width:84px;"></div>
<span class="m" style="left:150px;top:55px;">I 7.2</span>
<span class="m" style="left:194px;top:55px;">I 9.2</span>
<div class="ul" style="left:149px;top:67px;width:84px;"></div>
<span class="m" style="left:150px;top:68px;">I 7.3</span>
<span class="m" style="left:194px;top:68px;">I 9.3</span>
<div class="ul" style="left:149px;top:80px;width:84px;"></div>
<span class="m" style="left:150px;top:81px;">I 7.4</span>
<span class="m" style="left:194px;top:81px;">I 9.4</span>
<div class="ul" style="left:149px;top:93px;width:84px;"></div>
<span class="m" style="left:150px;top:94px;">I 7.5</span>
<span class="m" style="left:194px;top:94px;">I 9.5</span>
<div class="ul" style="left:149px;top:106px;width:84px;"></div>
<span class="m" style="left:150px;top:107px;">I 7.6</span>
<span class="m" style="left:194px;top:107px;">I 9.6</span>
<div class="ul" style="left:149px;top:119px;width:84px;"></div>
<span class="m" style="left:150px;top:120px;">I 7.7</span>
<span class="m" style="left:194px;top:120px;">I 9.7</span>
<div class="ul" style="left:149px;top:132px;width:84px;"></div>
<div class="ul" style="left:149px;top:145px;width:84px;"></div>
<div class="ul" style="left:149px;top:158px;width:84px;"></div>
<div class="ul" style="left:149px;top:171px;width:84px;"></div>
<span class="m" style="left:150px;top:172px;">I 8.0</span>
<span class="m" style="left:194px;top:172px;">I 10.0</span>
<div class="ul" style="left:149px;top:184px;width:84px;"></div>
<span class="m" style="left:150px;top:185px;">I 8.1</span>
<span class="m" style="left:194px;top:185px;">I 10.1</span>
<div class="ul" style="left:149px;top:197px;width:84px;"></div>
<span class="m" style="left:150px;top:198px;">I 8.2</span>
<span class="m" style="left:194px;top:198px;">I 10.2</span>
<div class="ul" style="left:149px;top:210px;width:84px;"></div>
<span class="m" style="left:150px;top:211px;">I 8.3</span>
<span class="m" style="left:194px;top:211px;">I 10.3</span>
<div class="ul" style="left:149px;top:223px;width:84px;"></div>
<span class="m" style="left:150px;top:224px;">I 8.4</span>
<span class="m" style="left:194px;top:224px;">I 10.4</span>
<div class="ul" style="left:149px;top:236px;width:84px;"></div>
<span class="m" style="left:150px;top:237px;">I 8.5</span>
<span class="m" style="left:194px;top:237px;">I 10.5</span>
<div class="ul" style="left:149px;top:249px;width:84px;"></div>
<span class="m" style="left:150px;top:250px;">I 8.6</span>
<span class="m" style="left:194px;top:250px;">I 10.6</span>
<div class="ul" style="left:149px;top:262px;width:84px;"></div>
<span class="m" style="left:150px;top:263px;">I 8.7</span>
<span class="m" style="left:194px;top:263px;">I 10.7</span>
<div class="ul" style="left:149px;top:275px;width:84px;"></div>
<span class="m" style="left:150px;top:276px;">Stop</span>
<span class="m" style="left:194px;top:276px;">Stop</span>
<div class="led lg" style="left:135px;top:17px;"></div>
<div class="led lg" style="left:135px;top:30px;"></div>
<div class="led lg" style="left:135px;top:43px;"></div>
<div class="led lg" style="left:135px;top:57px;"></div>
<div class="led lg" style="left:135px;top:70px;"></div>
<div class="led lg" style="left:135px;top:83px;"></div>
<div class="led lg" style="left:135px;top:96px;"></div>
<div class="led lg" style="left:135px;top:109px;"></div>
<div class="led lg" style="left:135px;top:122px;"></div>
<div class="led lg" style="left:135px;top:136px;"></div>
<div class="led lg" style="left:135px;top:162px;"></div>
<div class="led lg" style="left:135px;top:175px;"></div>
<div class="led lg" style="left:135px;top:188px;"></div>
<div class="led lg" style="left:135px;top:201px;"></div>
<div class="led lg" style="left:135px;top:215px;"></div>
<div class="led lg" style="left:135px;top:228px;"></div>
<div class="led lg" style="left:135px;top:241px;"></div>
<div class="led lg" style="left:135px;top:254px;"></div>
<div class="led lg" style="left:135px;top:267px;"></div>
<div class="led lr" style="left:135px;top:280px;"></div>
<div class="led lg" style="left:243px;top:17px;"></div>
<div class="led lg" style="left:243px;top:30px;"></div>
<div class="led lg" style="left:243px;top:43px;"></div>
<div class="led lg" style="left:243px;top:56px;"></div>
<div class="led lg" style="left:243px;top:69px;"></div>
<div class="led lg" style="left:243px;top:82px;"></div>
<div class="led lg" style="left:243px;top:96px;"></div>
<div class="led lg" style="left:243px;top:109px;"></div>
<div class="led lg" style="left:243px;top:122px;"></div>
<div class="led lg" style="left:243px;top:135px;"></div>
<div class="led lg" style="left:243px;top:161px;"></div>
<div class="led lg" style="left:243px;top:175px;"></div>
<div class="led lg" style="left:243px;top:188px;"></div>
<div class="led lg" style="left:243px;top:201px;"></div>
<div class="led lg" style="left:243px;top:214px;"></div>
<div class="led lg" style="left:243px;top:227px;"></div>
<div class="led lg" style="left:243px;top:240px;"></div>
<div class="led lg" style="left:243px;top:253px;"></div>
<div class="led lg" style="left:243px;top:267px;"></div>
<div class="led lr" style="left:243px;top:280px;"></div>
<div style="left:258px;top:2px;width:124px;height:302px;background:linear-gradient(90deg,#4a4a4a,#444 45%,#333 80%,#222);"></div>
<span class="mh" style="left:258px;top:2px;width:124px;">32 Digital Output</span>
<span class="mh" style="left:264px;top:290px;width:124px;">SM-20032-00</span>
<div style="left:273px;top:15px;width:94px;height:275px;background:#ffb266;"></div>
<span class="m" style="left:278px;top:16px;">Run</span>
<span class="m" style="left:322px;top:16px;">Run</span>
<div class="ul" style="left:277px;top:28px;width:84px;"></div>
<span class="m" style="left:278px;top:29px;">Q 5.0</span>
<span class="m" style="left:322px;top:29px;">Q 7.0</span>
<div class="ul" style="left:277px;top:41px;width:84px;"></div>
<span class="m" style="left:278px;top:42px;">Q 5.1</span>
<span class="m" style="left:322px;top:42px;">Q 7.1</span>
<div class="ul" style="left:277px;top:54px;width:84px;"></div>
<span class="m" style="left:278px;top:55px;">Q 5.2</span>
<span class="m" style="left:322px;top:55px;">Q 7.2</span>
<div class="ul" style="left:277px;top:67px;width:84px;"></div>
<span class="m" style="left:278px;top:68px;">Q 5.3</span>
<span class="m" style="left:322px;top:68px;">Q 7.3</span>
<div class="ul" style="left:277px;top:80px;width:84px;"></div>
<span class="m" style="left:278px;top:81px;">Q 5.4</span>
<span class="m" style="left:322px;top:81px;">Q 7.4</span>
<div class="ul" style="left:277px;top:93px;width:84px;"></div>
<span class="m" style="left:278px;top:94px;">Q 5.5</span>
<span class="m" style="left:322px;top:94px;">Q 7.5</span>
<div class="ul" style="left:277px;top:106px;width:84px;"></div>
<span class="m" style="left:278px;top:107px;">Q 5.6</span>
<span class="m" style="left:322px;top:107px;">Q 7.6</span>
<div class="ul" style="left:277px;top:119px;width:84px;"></div>
<span class="m" style="left:278px;top:120px;">Q 5.7</span>
<span class="m" style="left:322px;top:120px;">Q 7.7</span>
<div class="ul" style="left:277px;top:132px;width:84px;"></div>
<div class="ul" style="left:277px;top:145px;width:84px;"></div>
<div class="ul" style="left:277px;top:158px;width:84px;"></div>
<div class="ul" style="left:277px;top:171px;width:84px;"></div>
<span class="m" style="left:278px;top:172px;">Q 6.0</span>
<span class="m" style="left:322px;top:172px;">Q 8.0</span>
<div class="ul" style="left:277px;top:184px;width:84px;"></div>
<span class="m" style="left:278px;top:185px;">Q 6.1</span>
<span class="m" style="left:322px;top:185px;">Q 8.1</span>
<div class="ul" style="left:277px;top:197px;width:84px;"></div>
<span class="m" style="left:278px;top:198px;">Q 6.2</span>
<span class="m" style="left:322px;top:198px;">Q 8.2</span>
<div class="ul" style="left:277px;top:210px;width:84px;"></div>
<span class="m" style="left:278px;top:211px;">Q 6.3</span>
<span class="m" style="left:322px;top:211px;">Q 8.3</span>
<div class="ul" style="left:277px;top:223px;width:84px;"></div>
<span class="m" style="left:278px;top:224px;">Q 6.4</span>
<span class="m" style="left:322px;top:224px;">Q 8.4</span>
<div class="ul" style="left:277px;top:236px;width:84px;"></div>
<span class="m" style="left:278px;top:237px;">Q 6.5</span>
<span class="m" style="left:322px;top:237px;">Q 8.5</span>
<div class="ul" style="left:277px;top:249px;width:84px;"></div>
<span class="m" style="left:278px;top:250px;">Q 6.6</span>
<span class="m" style="left:322px;top:250px;">Q 8.6</span>
<div class="ul" style="left:277px;top:262px;width:84px;"></div>
<span class="m" style="left:278px;top:263px;">Q 6.7</span>
<span class="m" style="left:322px;top:263px;">Q 8.7</span>
<div class="ul" style="left:277px;top:275px;width:84px;"></div>
<span class="m" style="left:278px;top:276px;">Stop</span>
<span class="m" style="left:322px;top:276px;">Stop</span>
<div class="led lg" style="left:263px;top:17px;"></div>
<div class="led lg" style="left:263px;top:30px;"></div>
<div class="led lg" style="left:263px;top:43px;"></div>
<div class="led lg" style="left:263px;top:57px;"></div>
<div class="led lg" style="left:263px;top:70px;"></div>
<div class="led lg" style="left:263px;top:83px;"></div>
<div class="led lg" style="left:263px;top:96px;"></div>
<div class="led lg" style="left:263px;top:109px;"></div>
<div class="led lg" style="left:263px;top:122px;"></div>
<div class="led lg" style="left:263px;top:136px;"></div>
<div class="led lg" style="left:263px;top:162px;"></div>
<div class="led lg" style="left:263px;top:175px;"></div>
<div class="led lg" style="left:263px;top:188px;"></div>
<div class="led lg" style="left:263px;top:201px;"></div>
<div class="led lg" style="left:263px;top:215px;"></div>
<div class="led lg" style="left:263px;top:228px;"></div>
<div class="led lg" style="left:263px;top:241px;"></div>
<div class="led lg" style="left:263px;top:254px;"></div>
<div class="led lg" style="left:263px;top:267px;"></div>
<div class="led lr" style="left:263px;top:280px;"></div>
<div class="led lg" style="left:371px;top:17px;"></div>
<div class="led lg" style="left:371px;top:30px;"></div>
<div class="led lg" style="left:371px;top:43px;"></div>
<div class="led lg" style="left:371px;top:56px;"></div>
<div class="led lg" style="left:371px;top:69px;"></div>
<div class="led lg" style="left:371px;top:82px;"></div>
<div class="led lg" style="left:371px;top:96px;"></div>
<div class="led lg" style="left:371px;top:109px;"></div>
<div class="led lg" style="left:371px;top:122px;"></div>
<div class="led lg" style="left:371px;top:135px;"></div>
<div class="led lg" style="left:371px;top:161px;"></div>
<div class="led lg" style="left:371px;top:175px;"></div>
<div class="led lg" style="left:371px;top:188px;"></div>
<div class="led lg" style="left:371px;top:201px;"></div>
<div class="led lg" style="left:371px;top:214px;"></div>
<div class="led lg" style="left:371px;top:227px;"></div>
<div class="led lg" style="left:371px;top:240px;"></div>
<div class="led lg" style="left:371px;top:253px;"></div>
<div class="led lg" style="left:371px;top:267px;"></div>
<div class="led lr" style="left:371px;top:280px;"></div>
<div style="left:386px;top:2px;width:124px;height:302px;background:linear-gradient(90deg,#4a4a4a,#444 45%,#333 80%,#222);"></div>
<span class="mh" style="left:386px;top:2px;width:124px;">32 Relay Output</span>
<span class="mh" style="left:392px;top:290px;width:124px;">SM-20032-40</span>
<div style="left:401px;top:15px;width:94px;height:275px;background:#ffb266;"></div>
<span class="m" style="left:406px;top:16px;">Run</span>
<span class="m" style="left:450px;top:16px;">Run</span>
<div class="ul" style="left:405px;top:28px;width:84px;"></div>
<span class="m" style="left:406px;top:29px;">Q 1.0</span>
<span class="m" style="left:450px;top:29px;">Q 3.0</span>
<div class="ul" style="left:405px;top:41px;width:84px;"></div>
<span class="m" style="left:406px;top:42px;">Q 1.1</span>
<span class="m" style="left:450px;top:42px;">Q 3.1</span>
<div class="ul" style="left:405px;top:54px;width:84px;"></div>
<span class="m" style="left:406px;top:55px;">Q 1.2</span>
<span class="m" style="left:450px;top:55px;">Q 3.2</span>
<div class="ul" style="left:405px;top:67px;width:84px;"></div>
<span class="m" style="left:406px;top:68px;">Q 1.3</span>
<span class="m" style="left:450px;top:68px;">Q 3.3</span>
<div class="ul" style="left:405px;top:80px;width:84px;"></div>
<span class="m" style="left:406px;top:81px;">Q 1.4</span>
<span class="m" style="left:450px;top:81px;">Q 3.4</span>
<div class="ul" style="left:405px;top:93px;width:84px;"></div>
<span class="m" style="left:406px;top:94px;">Q 1.5</span>
<span class="m" style="left:450px;top:94px;">Q 3.5</span>
<div class="ul" style="left:405px;top:106px;width:84px;"></div>
<span class="m" style="left:406px;top:107px;">Q 1.6</span>
<span class="m" style="left:450px;top:107px;">Q 3.6</span>
<div class="ul" style="left:405px;top:119px;width:84px;"></div>
<span class="m" style="left:406px;top:120px;">Q 1.7</span>
<span class="m" style="left:450px;top:120px;">Q 3.7</span>
<div class="ul" style="left:405px;top:132px;width:84px;"></div>
<div class="ul" style="left:405px;top:145px;width:84px;"></div>
<div class="ul" style="left:405px;top:158px;width:84px;"></div>
<div class="ul" style="left:405px;top:171px;width:84px;"></div>
<span class="m" style="left:406px;top:172px;">Q 2.0</span>
<span class="m" style="left:450px;top:172px;">Q 4.0</span>
<div class="ul" style="left:405px;top:184px;width:84px;"></div>
<span class="m" style="left:406px;top:185px;">Q 2.1</span>
<span class="m" style="left:450px;top:185px;">Q 4.1</span>
<div class="ul" style="left:405px;top:197px;width:84px;"></div>
<span class="m" style="left:406px;top:198px;">Q 2.2</span>
<span class="m" style="left:450px;top:198px;">Q 4.2</span>
<div class="ul" style="left:405px;top:210px;width:84px;"></div>
<span class="m" style="left:406px;top:211px;">Q 2.3</span>
<span class="m" style="left:450px;top:211px;">Q 4.3</span>
<div class="ul" style="left:405px;top:223px;width:84px;"></div>
<span class="m" style="left:406px;top:224px;">Q 2.4</span>
<span class="m" style="left:450px;top:224px;">Q 4.4</span>
<div class="ul" style="left:405px;top:236px;width:84px;"></div>
<span class="m" style="left:406px;top:237px;">Q 2.5</span>
<span class="m" style="left:450px;top:237px;">Q 4.5</span>
<div class="ul" style="left:405px;top:249px;width:84px;"></div>
<span class="m" style="left:406px;top:250px;">Q 2.6</span>
<span class="m" style="left:450px;top:250px;">Q 4.6</span>
<div class="ul" style="left:405px;top:262px;width:84px;"></div>
<span class="m" style="left:406px;top:263px;">Q 2.7</span>
<span class="m" style="left:450px;top:263px;">Q 4.7</span>
<div class="ul" style="left:405px;top:275px;width:84px;"></div>
<span class="m" style="left:406px;top:276px;">Stop</span>
<span class="m" style="left:450px;top:276px;">Stop</span>
<div class="led lg" style="left:391px;top:17px;"></div>
<div class="led lg" style="left:391px;top:30px;"></div>
<div class="led lg" style="left:391px;top:43px;"></div>
<div class="led lg" style="left:391px;top:57px;"></div>
<div class="led lg" style="left:391px;top:70px;"></div>
<div class="led lg" style="left:391px;top:83px;"></div>
<div class="led lg" style="left:391px;top:96px;"></div>
<div class="led lg" style="left:391px;top:109px;"></div>
<div class="led lg" style="left:391px;top:122px;"></div>
<div class="led lg" style="left:391px;top:136px;"></div>
<div class="led lg" style="left:391px;top:162px;"></div>
<div class="led lg" style="left:391px;top:175px;"></div>
<div class="led lg" style="left:391px;top:188px;"></div>
<div class="led lg" style="left:391px;top:201px;"></div>
<div class="led lg" style="left:391px;top:215px;"></div>
<div class="led lg" style="left:391px;top:228px;"></div>
<div class="led lg" style="left:391px;top:241px;"></div>
<div class="led lg" style="left:391px;top:254px;"></div>
<div class="led lg" style="left:391px;top:267px;"></div>
<div class="led lr" style="left:391px;top:280px;"></div>
<div class="led lg" style="left:499px;top:17px;"></div>
<div class="led lg" style="left:499px;top:30px;"></div>
<div class="led lg" style="left:499px;top:43px;"></div>
<div class="led lg" style="left:499px;top:56px;"></div>
<div class="led lg" style="left:499px;top:69px;"></div>
<div class="led lg" style="left:499px;top:82px;"></div>
<div class="led lg" style="left:499px;top:96px;"></div>
<div class="led lg" style="left:499px;top:109px;"></div>
<div class="led lg" style="left:499px;top:122px;"></div>
<div class="led lg" style="left:499px;top:135px;"></div>
<div class="led lg" style="left:499px;top:161px;"></div>
<div class="led lg" style="left:499px;top:175px;"></div>
<div class="led lg" style="left:499px;top:188px;"></div>
<div class="led lg" style="left:499px;top:201px;"></div>
<div class="led lg" style="left:499px;top:214px;"></div>
<div class="led lg" style="left:499px;top:227px;"></div>
<div class="led lg" style="left:499px;top:240px;"></div>
<div class="led lg" style="left:499px;top:253px;"></div>
<div class="led lg" style="left:499px;top:267px;"></div>
<div class="led lr" style="left:499px;top:280px;"></div>
<div style="left:514px;top:2px;width:124px;height:302px;background:linear-gradient(90deg,#4a4a4a,#444 45%,#333 80%,#222);"></div>
<span class="mh" style="left:514px;top:2px;width:124px;">16 DI / 16 RQ</span>
<span class="mh" style="left:520px;top:290px;width:124px;">SM-31616-40</span>
<div style="left:529px;top:15px;width:94px;height:275px;background:#98fb98;"></div>
<div style="left:576px;top:15px;width:47px;height:275px;background:#ffb266;"></div>
<span class="m" style="left:534px;top:16px;">Run</span>
<span class="m" style="left:578px;top:16px;">Run</span>
<div class="ul" style="left:533px;top:28px;width:84px;"></div>
<span class="m" style="left:534px;top:29px;">I 1.0</span>
<span class="m" style="left:578px;top:29px;">Q 9.0</span>
<div class="ul" style="left:533px;top:41px;width:84px;"></div>
<span class="m" style="left:534px;top:42px;">I 1.1</span>
<span class="m" style="left:578px;top:42px;">Q 9.1</span>
<div class="ul" style="left:533px;top:54px;width:84px;"></div>
<span class="m" style="left:534px;top:55px;">I 1.2</span>
<span class="m" style="left:578px;top:55px;">Q 9.2</span>
<div class="ul" style="left:533px;top:67px;width:84px;"></div>
<span class="m" style="left:534px;top:68px;">I 1.3</span>
<span class="m" style="left:578px;top:68px;">Q 9.3</span>
<div class="ul" style="left:533px;top:80px;width:84px;"></div>
<span class="m" style="left:534px;top:81px;">I 1.4</span>
<span class="m" style="left:578px;top:81px;">Q 9.4</span>
<div class="ul" style="left:533px;top:93px;width:84px;"></div>
<span class="m" style="left:534px;top:94px;">I 1.5</span>
<span class="m" style="left:578px;top:94px;">Q 9.5</span>
<div class="ul" style="left:533px;top:106px;width:84px;"></div>
<span class="m" style="left:534px;top:107px;">I 1.6</span>
<span class="m" style="left:578px;top:107px;">Q 9.6</span>
<div class="ul" style="left:533px;top:119px;width:84px;"></div>
<span class="m" style="left:534px;top:120px;">I 1.7</span>
<span class="m" style="left:578px;top:120px;">Q 9.7</span>
<div class="ul" style="left:533px;top:132px;width:84px;"></div>
<div class="ul" style="left:533px;top:145px;width:84px;"></div>
<div class="ul" style="left:533px;top:158px;width:84px;"></div>
<div class="ul" style="left:533px;top:171px;width:84px;"></div>
<span class="m" style="left:534px;top:172px;">I 2.0</span>
<span class="m" style="left:578px;top:172px;">Q 10.0</span>
<div class="ul" style="left:533px;top:184px;width:84px;"></div>
<span class="m" style="left:534px;top:185px;">I 2.1</span>
<span class="m" style="left:578px;top:185px;">Q 10.1</span>
<div class="ul" style="left:533px;top:197px;width:84px;"></div>
<span class="m" style="left:534px;top:198px;">I 2.2</span>
<span class="m" style="left:578px;top:198px;">Q 10.2</span>
<div class="ul" style="left:533px;top:210px;width:84px;"></div>
<span class="m" style="left:534px;top:211px;">I 2.3</span>
<span class="m" style="left:578px;top:211px;">Q 10.3</span>
<div class="ul" style="left:533px;top:223px;width:84px;"></div>
<span class="m" style="left:534px;top:224px;">I 2.4</span>
<span class="m" style="left:578px;top:224px;">Q 10.4</span>
<div class="ul" style="left:533px;top:236px;width:84px;"></div>
<span class="m" style="left:534px;top:237px;">I 2.5</span>
<span class="m" style="left:578px;top:237px;">Q 10.5</span>
<div class="ul" style="left:533px;top:249px;width:84px;"></div>
<span class="m" style="left:534px;top:250px;">I 2.6</span>
<span class="m" style="left:578px;top:250px;">Q 10.6</span>
<div class="ul" style="left:533px;top:262px;width:84px;"></div>
<span class="m" style="left:534px;top:263px;">I 2.7</span>
<span class="m" style="left:578px;top:263px;">Q 10.7</span>
<div class="ul" style="left:533px;top:275px;width:84px;"></div>
<span class="m" style="left:534px;top:276px;">Stop</span>
<span class="m" style="left:578px;top:276px;">Stop</span>
<div class="led lg" style="left:519px;top:17px;"></div>
<div class="led lg" style="left:519px;top:30px;"></div>
<div class="led lg" style="left:519px;top:43px;"></div>
<div class="led lg" style="left:519px;top:57px;"></div>
<div class="led lg" style="left:519px;top:70px;"></div>
<div class="led lg" style="left:519px;top:83px;"></div>
<div class="led lg" style="left:519px;top:96px;"></div>
<div class="led lg" style="left:519px;top:109px;"></div>
<div class="led lg" style="left:519px;top:122px;"></div>
<div class="led lg" style="left:519px;top:136px;"></div>
<div class="led lg" style="left:519px;top:162px;"></div>
<div class="led lg" style="left:519px;top:175px;"></div>
<div class="led lg" style="left:519px;top:188px;"></div>
<div class="led lg" style="left:519px;top:201px;"></div>
<div class="led lg" style="left:519px;top:215px;"></div>
<div class="led lg" style="left:519px;top:228px;"></div>
<div class="led lg" style="left:519px;top:241px;"></div>
<div class="led lg" style="left:519px;top:254px;"></div>
<div class="led lg" style="left:519px;top:267px;"></div>
<div class="led lr" style="left:519px;top:280px;"></div>
<div class="led lg" style="left:627px;top:17px;"></div>
<div class="led lg" style="left:627px;top:30px;"></div>
<div class="led lg" style="left:627px;top:43px;"></div>
<div class="led lg" style="left:627px;top:56px;"></div>
<div class="led lg" style="left:627px;top:69px;"></div>
<div class="led lg" style="left:627px;top:82px;"></div>
<div class="led lg" style="left:627px;top:96px;"></div>
<div class="led lg" style="left:627px;top:109px;"></div>
<div class="led lg" style="left:627px;top:122px;"></div>
<div class="led lg" style="left:627px;top:135px;"></div>
<div class="led lg" style="left:627px;top:161px;"></div>
<div class="led lg" style="left:627px;top:175px;"></div>
<div class="led lg" style="left:627px;top:188px;"></div>
<div class="led lg" style="left:627px;top:201px;"></div>
<div class="led lg" style="left:627px;top:214px;"></div>
<div class="led lg" style="left:627px;top:227px;"></div>
<div class="led lg" style="left:627px;top:240px;"></div>
<div class="led lg" style="left:627px;top:253px;"></div>
<div class="led lg" style="left:627px;top:267px;"></div>
<div class="led lr" style="left:627px;top:280px;"></div>
<div style="left:642px;top:2px;width:124px;height:302px;background:linear-gradient(90deg,#4a4a4a,#444 45%,#333 80%,#222);"></div>
<span class="mh" style="left:642px;top:2px;width:124px;">8 Analog Input</span>
<span class="mh" style="left:648px;top:290px;width:124px;">SM-40800-00</span>
<div style="left:657px;top:15px;width:94px;height:275px;background:#66b3ff;"></div>
<span class="m" style="left:706px;top:16px;">Run</span>
<div class="ul" style="left:661px;top:28px;width:84px;"></div>
<span class="m" style="left:706px;top:29px;">CH 0</span>
<div class="ul" style="left:661px;top:41px;width:84px;"></div>
<span class="m" style="left:706px;top:42px;">IW 11</span>
<div class="ul" style="left:661px;top:54px;width:84px;"></div>
<span class="m" style="left:706px;top:55px;">CH 1</span>
<div class="ul" style="left:661px;top:67px;width:84px;"></div>
<span class="m" style="left:706px;top:68px;">IW 13</span>
<div class="ul" style="left:661px;top:80px;width:84px;"></div>
<span class="m" style="left:706px;top:81px;">CH 2</span>
<div class="ul" style="left:661px;top:93px;width:84px;"></div>
<span class="m" style="left:706px;top:94px;">IW 15</span>
<div class="ul" style="left:661px;top:106px;width:84px;"></div>
<span class="m" style="left:706px;top:107px;">CH 3</span>
<div class="ul" style="left:661px;top:119px;width:84px;"></div>
<div class="led lx" style="left:647px;top:17px;"></div>
<div class="led lx" style="left:647px;top:30px;"></div>
<div class="led lx" style="left:647px;top:43px;"></div>
<div class="led lx" style="left:647px;top:57px;"></div>
<div class="led lx" style="left:647px;top:70px;"></div>
<div class="led lx" style="left:647px;top:83px;"></div>
<div class="led lx" style="left:647px;top:96px;"></div>
<div class="led lx" style="left:647px;top:109px;"></div>
<div class="led lg" style="left:755px;top:17px;"></div>
<div class="led lg" style="left:755px;top:30px;"></div>
<div class="led lg" style="left:755px;top:43px;"></div>
<div class="led lg" style="left:755px;top:56px;"></div>
<div class="led lg" style="left:755px;top:69px;"></div>
<div class="led lg" style="left:755px;top:82px;"></div>
<div class="led lg" style="left:755px;top:96px;"></div>
<div class="led lg" style="left:755px;top:109px;"></div>
<div style="left:770px;top:2px;width:124px;height:302px;background:linear-gradient(90deg,#4a4a4a,#444 45%,#333 80%,#222);"></div>
<span class="mh" style="left:770px;top:2px;width:124px;">4 Analog Output</span>
<span class="mh" style="left:776px;top:290px;width:124px;">SM-50400-00</span>
<div style="left:785px;top:15px;width:94px;height:275px;background:#ffff66;"></div>
<span class="m" style="left:834px;top:16px;">Run</span>
<div class="ul" style="left:789px;top:28px;width:84px;"></div>
<span class="m" style="left:790px;top:29px;">CH0 QW 11 5 V.</span>
<div class="ul" style="left:789px;top:41px;width:84px;"></div>
<span class="m" style="left:834px;top:42px;">10 V.</span>
<div class="ul" style="left:789px;top:54px;width:84px;"></div>
<span class="m" style="left:834px;top:55px;">20 Ma.</span>
<div class="ul" style="left:789px;top:67px;width:84px;"></div>
<div class="ul" style="left:789px;top:80px;width:84px;"></div>
<span class="m" style="left:790px;top:81px;">CH1 QW 13 5 V.</span>
<div class="ul" style="left:789px;top:93px;width:84px;"></div>
<span class="m" style="left:834px;top:94px;">10 V.</span>
<div class="ul" style="left:789px;top:106px;width:84px;"></div>
<span class="m" style="left:834px;top:107px;">20 Ma.</span>
<div class="ul" style="left:789px;top:119px;width:84px;"></div>
<div class="led lx" style="left:775px;top:17px;"></div>
<div class="led lx" style="left:775px;top:30px;"></div>
<div class="led lx" style="left:775px;top:43px;"></div>
<div class="led lx" style="left:775px;top:57px;"></div>
<div class="led lx" style="left:775px;top:70px;"></div>
<div class="led lx" style="left:775px;top:83px;"></div>
<div class="led lx" style="left:775px;top:96px;"></div>
<div class="led lx" style="left:775px;top:109px;"></div>
<div class="led lg" style="left:883px;top:17px;"></div>
<div class="led lg" style="left:883px;top:30px;"></div>
<div class="led lg" style="left:883px;top:43px;"></div>
<div class="led lg" style="left:883px;top:56px;"></div>
<div class="led lg" style="left:883px;top:69px;"></div>
<div class="led lg" style="left:883px;top:82px;"></div>
<div class="led lg" style="left:883px;top:96px;"></div>
<div class="led lg" style="left:883px;top:109px;"></div>
<div style="left:898px;top:2px;width:124px;height:302px;background:linear-gradient(90deg,#4a4a4a,#444 45%,#333 80%,#222);"></div>
<span class="mh" style="left:898px;top:2px;width:124px;">4 AI / 2 AQ</span>
<span class="mh" style="left:904px;top:290px;width:124px;">SM-60402-00</span>
<div style="left:913px;top:15px;width:94px;height:275px;background:#66b3ff;"></div>
<span class="m" style="left:962px;top:16px;">Run</span>
<div class="ul" style="left:917px;top:28px;width:84px;"></div>
<span class="m" style="left:962px;top:29px;">CH 0</span>
<div class="ul" style="left:917px;top:41px;width:84px;"></div>
<span class="m" style="left:962px;top:42px;">IW 27</span>
<div class="ul" style="left:917px;top:54px;width:84px;"></div>
<span class="m" style="left:962px;top:55px;">CH 1</span>
<div class="ul" style="left:917px;top:67px;width:84px;"></div>
<span class="m" style="left:962px;top:68px;">IW 29</span>
<div class="ul" style="left:917px;top:80px;width:84px;"></div>
<span class="m" style="left:962px;top:81px;">CH 2</span>
<div class="ul" style="left:917px;top:93px;width:84px;"></div>
<span class="m" style="left:962px;top:94px;">IW 31</span>
<div class="ul" style="left:917px;top:106px;width:84px;"></div>
<span class="m" style="left:962px;top:107px;">CH 3</span>
<div class="ul" style="left:917px;top:119px;width:84px;"></div>
<div class="led lx" style="left:903px;top:17px;"></div>
<div class="led lx" style="left:903px;top:30px;"></div>
<div class="led lx" style="left:903px;top:43px;"></div>
<div class="led lx" style="left:903px;top:57px;"></div>
<div class="led lx" style="left:903px;top:70px;"></div>
<div class="led lx" style="left:903px;top:83px;"></div>
<div class="led lx" style="left:903px;top:96px;"></div>
<div class="led lx" style="left:903px;top:109px;"></div>
<div class="led lg" style="left:1011px;top:17px;"></div>
<div class="led lg" style="left:1011px;top:30px;"></div>
<div class="led lg" style="left:1011px;top:43px;"></div>
<div class="led lg" style="left:1011px;top:56px;"></div>
<div class="led lg" style="left:1011px;top:69px;"></div>
<div class="led lg" style="left:1011px;top:82px;"></div>
<div class="led lg" style="left:1011px;top:96px;"></div>
<div class="led lg" style="left:1011px;top:109px;"></div>
<div style="left:1026px;top:2px;width:124px;height:302px;background:linear-gradient(90deg,#4a4a4a,#444 45%,#333 80%,#222);"></div>
<span class="mh" style="left:1026px;top:2px;width:124px;">Communication</span>
<span class="mh" style="left:1032px;top:290px;width:124px;">SM-80202-00</span>
<div style="left:1041px;top:15px;width:94px;height:275px;background:#ffaec9;"></div>
<span class="m" style="left:1090px;top:16px;">Run</span>
<div class="ul" style="left:1045px;top:28px;width:84px;"></div>
<span class="m" style="left:1046px;top:29px;">Ch. Slc.</span>
<span class="m" style="left:1090px;top:29px;">I 3.0</span>
<div class="ul" style="left:1045px;top:41px;width:84px;"></div>
<span class="m" style="left:1046px;top:42px;">S.B.N.E</span>
<span class="m" style="left:1090px;top:42px;">I 3.1</span>
<div class="ul" style="left:1045px;top:54px;width:84px;"></div>
<span class="m" style="left:1046px;top:55px;">R.B.N.E</span>
<span class="m" style="left:1090px;top:55px;">I 3.2</span>
<div class="ul" style="left:1045px;top:67px;width:84px;"></div>
<span class="m" style="left:1046px;top:68px;">R.Comp.</span>
<span class="m" style="left:1090px;top:68px;">I 3.3</span>
<div class="ul" style="left:1045px;top:80px;width:84px;"></div>
<span class="m" style="left:1046px;top:81px;">Crc Err.</span>
<span class="m" style="left:1090px;top:81px;">I 3.4</span>
<div class="ul" style="left:1045px;top:93px;width:84px;"></div>
<span class="m" style="left:1046px;top:94px;letter-spacing:-0.25px;">Frame 0</span>
<span class="m" style="left:1090px;top:94px;">I 3.5</span>
<div class="ul" style="left:1045px;top:106px;width:84px;"></div>
<span class="m" style="left:1046px;top:107px;letter-spacing:-0.25px;">Frame 1</span>
<span class="m" style="left:1090px;top:107px;">I 3.6</span>
<div class="ul" style="left:1045px;top:119px;width:84px;"></div>
<span class="m" style="left:1046px;top:120px;letter-spacing:-0.25px;">Frame 2</span>
<span class="m" style="left:1090px;top:120px;">I 3.7</span>
<div class="ul" style="left:1045px;top:132px;width:84px;"></div>
<span class="m" style="left:1046px;top:133px;">Rcv.Byte IB 4</span>
<div class="ul" style="left:1045px;top:145px;width:84px;"></div>
<span class="m" style="left:1046px;top:146px;letter-spacing:-0.3px;">2 x RS485/RS422</span>
<div class="ul" style="left:1045px;top:158px;width:84px;"></div>
<span class="m" style="left:1046px;top:159px;">Snd.Byte QB 24</span>
<div class="ul" style="left:1045px;top:171px;width:84px;"></div>
<span class="m" style="left:1046px;top:172px;">Ch. Slc.</span>
<span class="m" style="left:1090px;top:172px;">Q 23.0</span>
<div class="ul" style="left:1045px;top:184px;width:84px;"></div>
<span class="m" style="left:1046px;top:185px;">S. Data</span>
<span class="m" style="left:1090px;top:185px;">Q 23.1</span>
<div class="ul" style="left:1045px;top:197px;width:84px;"></div>
<span class="m" style="left:1046px;top:198px;">S. Flush</span>
<span class="m" style="left:1090px;top:198px;">Q 23.2</span>
<div class="ul" style="left:1045px;top:210px;width:84px;"></div>
<span class="m" style="left:1046px;top:211px;">R. Start</span>
<span class="m" style="left:1090px;top:211px;">Q 23.3</span>
<div class="ul" style="left:1045px;top:223px;width:84px;"></div>
<span class="m" style="left:1046px;top:224px;">R. Stop</span>
<span class="m" style="left:1090px;top:224px;">Q 23.4</span>
<div class="ul" style="left:1045px;top:236px;width:84px;"></div>
<span class="m" style="left:1046px;top:237px;letter-spacing:-0.25px;">Frame 0</span>
<span class="m" style="left:1090px;top:237px;">Q 23.5</span>
<div class="ul" style="left:1045px;top:249px;width:84px;"></div>
<span class="m" style="left:1046px;top:250px;letter-spacing:-0.25px;">Frame 1</span>
<span class="m" style="left:1090px;top:250px;">Q 23.6</span>
<div class="ul" style="left:1045px;top:262px;width:84px;"></div>
<span class="m" style="left:1046px;top:263px;letter-spacing:-0.25px;">Frame 2</span>
<span class="m" style="left:1090px;top:263px;">Q 23.7</span>
<div class="ul" style="left:1045px;top:275px;width:84px;"></div>
<span class="m" style="left:1090px;top:276px;">Stop</span>
<div class="led lx" style="left:1031px;top:17px;"></div>
<div class="led lx" style="left:1031px;top:30px;"></div>
<div class="led lx" style="left:1031px;top:43px;"></div>
<div class="led lx" style="left:1031px;top:57px;"></div>
<div class="led lx" style="left:1031px;top:70px;"></div>
<div class="led lx" style="left:1031px;top:83px;"></div>
<div class="led lx" style="left:1031px;top:96px;"></div>
<div class="led lx" style="left:1031px;top:109px;"></div>
<div class="led lx" style="left:1031px;top:122px;"></div>
<div class="led lx" style="left:1031px;top:136px;"></div>
<div class="led lx" style="left:1031px;top:162px;"></div>
<div class="led lx" style="left:1031px;top:175px;"></div>
<div class="led lx" style="left:1031px;top:188px;"></div>
<div class="led lx" style="left:1031px;top:201px;"></div>
<div class="led lx" style="left:1031px;top:215px;"></div>
<div class="led lx" style="left:1031px;top:228px;"></div>
<div class="led lx" style="left:1031px;top:241px;"></div>
<div class="led lx" style="left:1031px;top:254px;"></div>
<div class="led lx" style="left:1031px;top:267px;"></div>
<div class="led lx" style="left:1031px;top:280px;"></div>
<div class="led lg" style="left:1139px;top:17px;"></div>
<div class="led lg" style="left:1139px;top:30px;"></div>
<div class="led lg" style="left:1139px;top:43px;"></div>
<div class="led lx" style="left:1139px;top:56px;"></div>
<div class="led lx" style="left:1139px;top:69px;"></div>
<div class="led lg" style="left:1139px;top:82px;"></div>
<div class="led lg" style="left:1139px;top:96px;"></div>
<div class="led lx" style="left:1139px;top:109px;"></div>
<div class="led lx" style="left:1139px;top:122px;"></div>
<div class="led lg" style="left:1139px;top:135px;"></div>
<div class="led lg" style="left:1139px;top:161px;"></div>
<div class="led lx" style="left:1139px;top:175px;"></div>
<div class="led lx" style="left:1139px;top:188px;"></div>
<div class="led lx" style="left:1139px;top:201px;"></div>
<div class="led lx" style="left:1139px;top:214px;"></div>
<div class="led lx" style="left:1139px;top:227px;"></div>
<div class="led lx" style="left:1139px;top:240px;"></div>
<div class="led lx" style="left:1139px;top:253px;"></div>
<div class="led lx" style="left:1139px;top:267px;"></div>
<div class="led lr" style="left:1139px;top:280px;"></div>
<div style="left:1154px;top:2px;width:124px;height:302px;background:linear-gradient(90deg,#4a4a4a,#444 45%,#333 80%,#222);"></div>
<span class="mh" style="left:1154px;top:2px;width:124px;">32 Relay Output</span>
<span class="mh" style="left:1160px;top:290px;width:124px;">SM-20032-40</span>
<div style="left:1169px;top:15px;width:94px;height:275px;background:#ffb266;"></div>
<span class="m" style="left:1174px;top:16px;">Run</span>
<span class="m" style="left:1218px;top:16px;">Run</span>
<div class="ul" style="left:1173px;top:28px;width:84px;"></div>
<span class="m" style="left:1174px;top:29px;">Q 93.0</span>
<span class="m" style="left:1218px;top:29px;">Q 95.0</span>
<div class="ul" style="left:1173px;top:41px;width:84px;"></div>
<span class="m" style="left:1174px;top:42px;">Q 93.1</span>
<span class="m" style="left:1218px;top:42px;">Q 95.1</span>
<div class="ul" style="left:1173px;top:54px;width:84px;"></div>
<span class="m" style="left:1174px;top:55px;">Q 93.2</span>
<span class="m" style="left:1218px;top:55px;">Q 95.2</span>
<div class="ul" style="left:1173px;top:67px;width:84px;"></div>
<span class="m" style="left:1174px;top:68px;">Q 93.3</span>
<span class="m" style="left:1218px;top:68px;">Q 95.3</span>
<div class="ul" style="left:1173px;top:80px;width:84px;"></div>
<span class="m" style="left:1174px;top:81px;">Q 93.4</span>
<span class="m" style="left:1218px;top:81px;">Q 95.4</span>
<div class="ul" style="left:1173px;top:93px;width:84px;"></div>
<span class="m" style="left:1174px;top:94px;">Q 93.5</span>
<span class="m" style="left:1218px;top:94px;">Q 95.5</span>
<div class="ul" style="left:1173px;top:106px;width:84px;"></div>
<span class="m" style="left:1174px;top:107px;">Q 93.6</span>
<span class="m" style="left:1218px;top:107px;">Q 95.6</span>
<div class="ul" style="left:1173px;top:119px;width:84px;"></div>
<span class="m" style="left:1174px;top:120px;">Q 93.7</span>
<span class="m" style="left:1218px;top:120px;">Q 95.7</span>
<div class="ul" style="left:1173px;top:132px;width:84px;"></div>
<div class="ul" style="left:1173px;top:145px;width:84px;"></div>
<div class="ul" style="left:1173px;top:158px;width:84px;"></div>
<div class="ul" style="left:1173px;top:171px;width:84px;"></div>
<span class="m" style="left:1174px;top:172px;">Q 94.0</span>
<span class="m" style="left:1218px;top:172px;">Q 96.0</span>
<div class="ul" style="left:1173px;top:184px;width:84px;"></div>
<span class="m" style="left:1174px;top:185px;">Q 94.1</span>
<span class="m" style="left:1218px;top:185px;">Q 96.1</span>
<div class="ul" style="left:1173px;top:197px;width:84px;"></div>
<span class="m" style="left:1174px;top:198px;">Q 94.2</span>
<span class="m" style="left:1218px;top:198px;">Q 96.2</span>
<div class="ul" style="left:1173px;top:210px;width:84px;"></div>
<span class="m" style="left:1174px;top:211px;">Q 94.3</span>
<span class="m" style="left:1218px;top:211px;">Q 96.3</span>
<div class="ul" style="left:1173px;top:223px;width:84px;"></div>
<span class="m" style="left:1174px;top:224px;">Q 94.4</span>
<span class="m" style="left:1218px;top:224px;">Q 96.4</span>
<div class="ul" style="left:1173px;top:236px;width:84px;"></div>
<span class="m" style="left:1174px;top:237px;">Q 94.5</span>
<span class="m" style="left:1218px;top:237px;">Q 96.5</span>
<div class="ul" style="left:1173px;top:249px;width:84px;"></div>
<span class="m" style="left:1174px;top:250px;">Q 94.6</span>
<span class="m" style="left:1218px;top:250px;">Q 96.6</span>
<div class="ul" style="left:1173px;top:262px;width:84px;"></div>
<span class="m" style="left:1174px;top:263px;">Q 94.7</span>
<span class="m" style="left:1218px;top:263px;">Q 96.7</span>
<div class="ul" style="left:1173px;top:275px;width:84px;"></div>
<span class="m" style="left:1174px;top:276px;">Stop</span>
<span class="m" style="left:1218px;top:276px;">Stop</span>
<div class="led lg" style="left:1159px;top:17px;"></div>
<div class="led lg" style="left:1159px;top:30px;"></div>
<div class="led lg" style="left:1159px;top:43px;"></div>
<div class="led lg" style="left:1159px;top:57px;"></div>
<div class="led lg" style="left:1159px;top:70px;"></div>
<div class="led lg" style="left:1159px;top:83px;"></div>
<div class="led lg" style="left:1159px;top:96px;"></div>
<div class="led lg" style="left:1159px;top:109px;"></div>
<div class="led lg" style="left:1159px;top:122px;"></div>
<div class="led lg" style="left:1159px;top:136px;"></div>
<div class="led lg" style="left:1159px;top:162px;"></div>
<div class="led lg" style="left:1159px;top:175px;"></div>
<div class="led lg" style="left:1159px;top:188px;"></div>
<div class="led lg" style="left:1159px;top:201px;"></div>
<div class="led lg" style="left:1159px;top:215px;"></div>
<div class="led lg" style="left:1159px;top:228px;"></div>
<div class="led lg" style="left:1159px;top:241px;"></div>
<div class="led lg" style="left:1159px;top:254px;"></div>
<div class="led lg" style="left:1159px;top:267px;"></div>
<div class="led lr" style="left:1159px;top:280px;"></div>
<div class="led lg" style="left:1267px;top:17px;"></div>
<div class="led lg" style="left:1267px;top:30px;"></div>
<div class="led lg" style="left:1267px;top:43px;"></div>
<div class="led lg" style="left:1267px;top:56px;"></div>
<div class="led lg" style="left:1267px;top:69px;"></div>
<div class="led lg" style="left:1267px;top:82px;"></div>
<div class="led lg" style="left:1267px;top:96px;"></div>
<div class="led lg" style="left:1267px;top:109px;"></div>
<div class="led lg" style="left:1267px;top:122px;"></div>
<div class="led lg" style="left:1267px;top:135px;"></div>
<div class="led lg" style="left:1267px;top:161px;"></div>
<div class="led lg" style="left:1267px;top:175px;"></div>
<div class="led lg" style="left:1267px;top:188px;"></div>
<div class="led lg" style="left:1267px;top:201px;"></div>
<div class="led lg" style="left:1267px;top:214px;"></div>
<div class="led lg" style="left:1267px;top:227px;"></div>
<div class="led lg" style="left:1267px;top:240px;"></div>
<div class="led lg" style="left:1267px;top:253px;"></div>
<div class="led lg" style="left:1267px;top:267px;"></div>
<div class="led lr" style="left:1267px;top:280px;"></div>
<div style="left:898px;top:308px;width:124px;height:302px;background:linear-gradient(90deg,#4a4a4a,#444 45%,#333 80%,#222);"></div>
<span class="mh" style="left:898px;top:308px;width:124px;">4 AI / 2 AQ</span>
<span class="mh" style="left:904px;top:596px;width:124px;">SM-60402-00</span>
<div style="left:913px;top:321px;width:94px;height:275px;background:#66b3ff;"></div>
<div style="left:1026px;top:308px;width:124px;height:302px;background:linear-gradient(90deg,#4a4a4a,#444 45%,#333 80%,#222);"></div>
<span class="mh" style="left:1026px;top:308px;width:124px;">32 Relay Output</span>
<span class="mh" style="left:1032px;top:596px;width:124px;">SM-20032-40</span>
<div style="left:1041px;top:321px;width:94px;height:275px;background:#ffb266;"></div>
<span class="m" style="left:1046px;top:322px;">Run</span>
<span class="m" style="left:1090px;top:322px;">Run</span>
<div class="ul" style="left:1045px;top:334px;width:84px;"></div>
<span class="m" style="left:1046px;top:335px;">Q 85.0</span>
<span class="m" style="left:1090px;top:335px;">Q 87.0</span>
<div class="ul" style="left:1045px;top:347px;width:84px;"></div>
<span class="m" style="left:1046px;top:348px;">Q 85.1</span>
<span class="m" style="left:1090px;top:348px;">Q 87.1</span>
<div class="ul" style="left:1045px;top:360px;width:84px;"></div>
<span class="m" style="left:1046px;top:361px;">Q 85.2</span>
<span class="m" style="left:1090px;top:361px;">Q 87.2</span>
<div class="ul" style="left:1045px;top:373px;width:84px;"></div>
<span class="m" style="left:1046px;top:374px;">Q 85.3</span>
<span class="m" style="left:1090px;top:374px;">Q 87.3</span>
<div class="ul" style="left:1045px;top:386px;width:84px;"></div>
<span class="m" style="left:1046px;top:387px;">Q 85.4</span>
<span class="m" style="left:1090px;top:387px;">Q 87.4</span>
<div class="ul" style="left:1045px;top:399px;width:84px;"></div>
<span class="m" style="left:1046px;top:400px;">Q 85.5</span>
<span class="m" style="left:1090px;top:400px;">Q 87.5</span>
<div class="ul" style="left:1045px;top:412px;width:84px;"></div>
<span class="m" style="left:1046px;top:413px;">Q 85.6</span>
<span class="m" style="left:1090px;top:413px;">Q 87.6</span>
<div class="ul" style="left:1045px;top:425px;width:84px;"></div>
<span class="m" style="left:1046px;top:426px;">Q 85.7</span>
<span class="m" style="left:1090px;top:426px;">Q 87.7</span>
<div class="ul" style="left:1045px;top:438px;width:84px;"></div>
<div class="ul" style="left:1045px;top:451px;width:84px;"></div>
<div class="ul" style="left:1045px;top:464px;width:84px;"></div>
<div class="ul" style="left:1045px;top:477px;width:84px;"></div>
<span class="m" style="left:1046px;top:478px;">Q 86.0</span>
<span class="m" style="left:1090px;top:478px;">Q 88.0</span>
<div class="ul" style="left:1045px;top:490px;width:84px;"></div>
<span class="m" style="left:1046px;top:491px;">Q 86.1</span>
<span class="m" style="left:1090px;top:491px;">Q 88.1</span>
<div class="ul" style="left:1045px;top:503px;width:84px;"></div>
<span class="m" style="left:1046px;top:504px;">Q 86.2</span>
<span class="m" style="left:1090px;top:504px;">Q 88.2</span>
<div class="ul" style="left:1045px;top:516px;width:84px;"></div>
<span class="m" style="left:1046px;top:517px;">Q 86.3</span>
<span class="m" style="left:1090px;top:517px;">Q 88.3</span>
<div class="ul" style="left:1045px;top:529px;width:84px;"></div>
<span class="m" style="left:1046px;top:530px;">Q 86.4</span>
<span class="m" style="left:1090px;top:530px;">Q 88.4</span>
<div class="ul" style="left:1045px;top:542px;width:84px;"></div>
<span class="m" style="left:1046px;top:543px;">Q 86.5</span>
<span class="m" style="left:1090px;top:543px;">Q 88.5</span>
<div class="ul" style="left:1045px;top:555px;width:84px;"></div>
<span class="m" style="left:1046px;top:556px;">Q 86.6</span>
<span class="m" style="left:1090px;top:556px;">Q 88.6</span>
<div class="ul" style="left:1045px;top:568px;width:84px;"></div>
<span class="m" style="left:1046px;top:569px;">Q 86.7</span>
<span class="m" style="left:1090px;top:569px;">Q 88.7</span>
<div class="ul" style="left:1045px;top:581px;width:84px;"></div>
<span class="m" style="left:1046px;top:582px;">Stop</span>
<span class="m" style="left:1090px;top:582px;">Stop</span>
<div class="led lg" style="left:1031px;top:323px;"></div>
<div class="led lg" style="left:1031px;top:336px;"></div>
<div class="led lg" style="left:1031px;top:349px;"></div>
<div class="led lg" style="left:1031px;top:363px;"></div>
<div class="led lg" style="left:1031px;top:376px;"></div>
<div class="led lg" style="left:1031px;top:389px;"></div>
<div class="led lg" style="left:1031px;top:402px;"></div>
<div class="led lg" style="left:1031px;top:415px;"></div>
<div class="led lg" style="left:1031px;top:428px;"></div>
<div class="led lg" style="left:1031px;top:442px;"></div>
<div class="led lg" style="left:1031px;top:468px;"></div>
<div class="led lg" style="left:1031px;top:481px;"></div>
<div class="led lg" style="left:1031px;top:494px;"></div>
<div class="led lg" style="left:1031px;top:507px;"></div>
<div class="led lg" style="left:1031px;top:521px;"></div>
<div class="led lg" style="left:1031px;top:534px;"></div>
<div class="led lg" style="left:1031px;top:547px;"></div>
<div class="led lg" style="left:1031px;top:560px;"></div>
<div class="led lg" style="left:1031px;top:573px;"></div>
<div class="led lr" style="left:1031px;top:586px;"></div>
<div class="led lg" style="left:1139px;top:323px;"></div>
<div class="led lg" style="left:1139px;top:336px;"></div>
<div class="led lg" style="left:1139px;top:349px;"></div>
<div class="led lg" style="left:1139px;top:362px;"></div>
<div class="led lg" style="left:1139px;top:375px;"></div>
<div class="led lg" style="left:1139px;top:388px;"></div>
<div class="led lg" style="left:1139px;top:402px;"></div>
<div class="led lg" style="left:1139px;top:415px;"></div>
<div class="led lg" style="left:1139px;top:428px;"></div>
<div class="led lg" style="left:1139px;top:441px;"></div>
<div class="led lg" style="left:1139px;top:467px;"></div>
<div class="led lg" style="left:1139px;top:481px;"></div>
<div class="led lg" style="left:1139px;top:494px;"></div>
<div class="led lg" style="left:1139px;top:507px;"></div>
<div class="led lg" style="left:1139px;top:520px;"></div>
<div class="led lg" style="left:1139px;top:533px;"></div>
<div class="led lg" style="left:1139px;top:546px;"></div>
<div class="led lg" style="left:1139px;top:559px;"></div>
<div class="led lg" style="left:1139px;top:573px;"></div>
<div class="led lr" style="left:1139px;top:586px;"></div>
<div style="left:1154px;top:308px;width:124px;height:302px;background:linear-gradient(90deg,#4a4a4a,#444 45%,#333 80%,#222);"></div>
<span class="mh" style="left:1154px;top:308px;width:124px;">16 DI / 16 RQ</span>
<span class="mh" style="left:1160px;top:596px;width:124px;">SM-31616-40</span>
<div style="left:1169px;top:321px;width:94px;height:275px;background:#98fb98;"></div>
<span class="m" style="left:1174px;top:322px;">Run</span>
<span class="m" style="left:1218px;top:322px;">Run</span>
<div class="ul" style="left:1173px;top:334px;width:84px;"></div>
<span class="m" style="left:1174px;top:335px;">I 97.0</span>
<span class="m" style="left:1218px;top:335px;">I 99.0</span>
<div class="ul" style="left:1173px;top:347px;width:84px;"></div>
<span class="m" style="left:1174px;top:348px;">I 97.1</span>
<span class="m" style="left:1218px;top:348px;">I 99.1</span>
<div class="ul" style="left:1173px;top:360px;width:84px;"></div>
<span class="m" style="left:1174px;top:361px;">I 97.2</span>
<span class="m" style="left:1218px;top:361px;">I 99.2</span>
<div class="ul" style="left:1173px;top:373px;width:84px;"></div>
<span class="m" style="left:1174px;top:374px;">I 97.3</span>
<span class="m" style="left:1218px;top:374px;">I 99.3</span>
<div class="ul" style="left:1173px;top:386px;width:84px;"></div>
<span class="m" style="left:1174px;top:387px;">I 97.4</span>
<span class="m" style="left:1218px;top:387px;">I 99.4</span>
<div class="ul" style="left:1173px;top:399px;width:84px;"></div>
<span class="m" style="left:1174px;top:400px;">I 97.5</span>
<span class="m" style="left:1218px;top:400px;">I 99.5</span>
<div class="ul" style="left:1173px;top:412px;width:84px;"></div>
<span class="m" style="left:1174px;top:413px;">I 97.6</span>
<span class="m" style="left:1218px;top:413px;">I 99.6</span>
<div class="ul" style="left:1173px;top:425px;width:84px;"></div>
<span class="m" style="left:1174px;top:426px;">I 97.7</span>
<span class="m" style="left:1218px;top:426px;">I 99.7</span>
<div class="ul" style="left:1173px;top:438px;width:84px;"></div>
<div class="ul" style="left:1173px;top:451px;width:84px;"></div>
<div class="ul" style="left:1173px;top:464px;width:84px;"></div>
<div class="ul" style="left:1173px;top:477px;width:84px;"></div>
<span class="m" style="left:1174px;top:478px;">I 98.0</span>
<span class="m" style="left:1218px;top:478px;">I 100.0</span>
<div class="ul" style="left:1173px;top:490px;width:84px;"></div>
<span class="m" style="left:1174px;top:491px;">I 98.1</span>
<span class="m" style="left:1218px;top:491px;">I 100.1</span>
<div class="ul" style="left:1173px;top:503px;width:84px;"></div>
<span class="m" style="left:1174px;top:504px;">I 98.2</span>
<span class="m" style="left:1218px;top:504px;">I 100.2</span>
<div class="ul" style="left:1173px;top:516px;width:84px;"></div>
<span class="m" style="left:1174px;top:517px;">I 98.3</span>
<span class="m" style="left:1218px;top:517px;">I 100.3</span>
<div class="ul" style="left:1173px;top:529px;width:84px;"></div>
<span class="m" style="left:1174px;top:530px;">I 98.4</span>
<span class="m" style="left:1218px;top:530px;">I 100.4</span>
<div class="ul" style="left:1173px;top:542px;width:84px;"></div>
<span class="m" style="left:1174px;top:543px;">I 98.5</span>
<span class="m" style="left:1218px;top:543px;">I 100.5</span>
<div class="ul" style="left:1173px;top:555px;width:84px;"></div>
<span class="m" style="left:1174px;top:556px;">I 98.6</span>
<span class="m" style="left:1218px;top:556px;">I 100.6</span>
<div class="ul" style="left:1173px;top:568px;width:84px;"></div>
<span class="m" style="left:1174px;top:569px;">I 98.7</span>
<span class="m" style="left:1218px;top:569px;">I 100.7</span>
<div class="ul" style="left:1173px;top:581px;width:84px;"></div>
<span class="m" style="left:1174px;top:582px;">Stop</span>
<span class="m" style="left:1218px;top:582px;">Stop</span>
<div class="led lg" style="left:1159px;top:323px;"></div>
<div class="led lg" style="left:1159px;top:336px;"></div>
<div class="led lg" style="left:1159px;top:349px;"></div>
<div class="led lg" style="left:1159px;top:363px;"></div>
<div class="led lg" style="left:1159px;top:376px;"></div>
<div class="led lg" style="left:1159px;top:389px;"></div>
<div class="led lg" style="left:1159px;top:402px;"></div>
<div class="led lg" style="left:1159px;top:415px;"></div>
<div class="led lg" style="left:1159px;top:428px;"></div>
<div class="led lg" style="left:1159px;top:442px;"></div>
<div class="led lg" style="left:1159px;top:468px;"></div>
<div class="led lg" style="left:1159px;top:481px;"></div>
<div class="led lg" style="left:1159px;top:494px;"></div>
<div class="led lg" style="left:1159px;top:507px;"></div>
<div class="led lg" style="left:1159px;top:521px;"></div>
<div class="led lg" style="left:1159px;top:534px;"></div>
<div class="led lg" style="left:1159px;top:547px;"></div>
<div class="led lg" style="left:1159px;top:560px;"></div>
<div class="led lg" style="left:1159px;top:573px;"></div>
<div class="led lr" style="left:1159px;top:586px;"></div>
<div class="led lg" style="left:1267px;top:323px;"></div>
<div class="led lg" style="left:1267px;top:336px;"></div>
<div class="led lg" style="left:1267px;top:349px;"></div>
<div class="led lg" style="left:1267px;top:362px;"></div>
<div class="led lg" style="left:1267px;top:375px;"></div>
<div class="led lg" style="left:1267px;top:388px;"></div>
<div class="led lg" style="left:1267px;top:402px;"></div>
<div class="led lg" style="left:1267px;top:415px;"></div>
<div class="led lg" style="left:1267px;top:428px;"></div>
<div class="led lg" style="left:1267px;top:441px;"></div>
<div class="led lg" style="left:1267px;top:467px;"></div>
<div class="led lg" style="left:1267px;top:481px;"></div>
<div class="led lg" style="left:1267px;top:494px;"></div>
<div class="led lg" style="left:1267px;top:507px;"></div>
<div class="led lg" style="left:1267px;top:520px;"></div>
<div class="led lg" style="left:1267px;top:533px;"></div>
<div class="led lg" style="left:1267px;top:546px;"></div>
<div class="led lg" style="left:1267px;top:559px;"></div>
<div class="led lg" style="left:1267px;top:573px;"></div>
<div class="led lr" style="left:1267px;top:586px;"></div>
<div style="left:0;top:734px;width:1191px;height:17px;background:#fff;"></div>
<div style="left:0;top:735px;width:1190px;height:15px;background:#f0f0f0;"></div>
<svg style="left:1175px;top:735px" width="16" height="15"><path d="M5.5 3.8l3.7 3.7-3.7 3.7" stroke="#555" stroke-width="2" fill="none"/></svg></div>
<div style="left:395px;top:207px;width:1018px;height:636px;background:#f0f0f0;box-shadow:0 3px 12px rgba(0,0,0,.4);overflow:hidden;">
<div style="left:0px;top:0px;width:1018px;height:26px;background:#fff;"></div>
<svg style="left:6px;top:5px" width="11" height="17" viewBox="0 0 11 17"><rect x="1.5" y="1" width="7" height="13" rx="1" fill="#e8e8e8" stroke="#8a8a8a"/><rect x="4" y="3" width="2" height="11" fill="#fff" stroke="#bbb" stroke-width=".5"/><circle cx="5" cy="3.5" r="1.2" fill="#6c3"/><rect x="2" y="14" width="6" height="1.5" fill="#333"/><rect x="0" y="15.5" width="10" height="1" fill="#555"/></svg>
<span class="t" style="left:24px;top:4px;font-size:12px;letter-spacing:0;line-height:18px;height:18px;">Modul Properties</span>
<svg style="left:997px;top:7px" width="12" height="12"><path d="M1 1l10 10M11 1l-10 10" stroke="#000" stroke-width="1.1" fill="none"/></svg>
<div style="left:12px;top:58px;width:995px;height:521px;background:#fff;border:1px solid #dcdcdc;"></div>
<div style="left:12px;top:38px;width:131px;height:21px;background:#fff;border:1px solid #dcdcdc;border-bottom:none;"></div>
<span class="t" style="left:20px;top:40px;letter-spacing:-0.520px;">STM 407 (SC-01612-00)</span>
<div class="gb" style="left:25px;top:72px;width:313px;height:139px;"></div>
<span class="t gt" style="left:31px;top:65px;letter-spacing:-0.479px;">General Settings</span>
<span class="t" style="left:38px;top:89px;letter-spacing:-0.493px;">Plc Address:</span>
<div style="left:103px;top:87px;width:45px;height:20px;background:#fff;border:1px solid #abadb3;"></div>
<div style="left:132px;top:89px;width:14px;height:8px;border:1px solid #c4c4c4;background:#f0f0f0;"></div>
<div style="left:132px;top:97px;width:14px;height:8px;border:1px solid #c4c4c4;background:#f0f0f0;"></div>
<svg style="left:132px;top:87px" width="14" height="20"><path d="M4.1 6.9L7 3.7L9.9 6.9z" fill="#000"/><path d="M4.2 12.5L7 15.6L9.8 12.5z" fill="#000"/></svg>
<span class="t" style="left:105px;top:88px;letter-spacing:-0.406px;">0</span>
<span class="t" style="left:170px;top:89px;letter-spacing:-0.453px;">Max. Cycle Int.:</span>
<div style="left:255px;top:86px;width:53px;height:20px;background:#fff;border:1px solid #abadb3;"></div>
<div style="left:292px;top:88px;width:14px;height:8px;border:1px solid #c4c4c4;background:#f0f0f0;"></div>
<div style="left:292px;top:96px;width:14px;height:8px;border:1px solid #c4c4c4;background:#f0f0f0;"></div>
<svg style="left:292px;top:86px" width="14" height="20"><path d="M4.1 6.9L7 3.7L9.9 6.9z" fill="#000"/><path d="M4.2 12.5L7 15.6L9.8 12.5z" fill="#000"/></svg>
<span class="t" style="left:257px;top:87px;letter-spacing:-0.396px;">100</span>
<span class="t" style="left:311px;top:89px;letter-spacing:-0.510px;">Ms.</span>
<div class="cb" style="left:38px;top:124px;width:13px;height:13px;"></div>
<span class="t" style="left:57px;top:115.5px;letter-spacing:-0.325px;">Write</span>
<span class="t" style="left:57px;top:128.5px;letter-spacing:-0.470px;">Protected</span>
<div class="cb" style="left:135px;top:124px;width:13px;height:13px;"></div>
<span class="t" style="left:154px;top:115.5px;letter-spacing:-0.395px;">Read-Write</span>
<span class="t" style="left:154px;top:128.5px;letter-spacing:-0.470px;">Protected</span>
<span class="t" style="left:247px;top:109.5px;letter-spacing:-0.521px;">Password:</span>
<div class="tbd" style="left:244px;top:128px;width:83px;height:20px;"></div>
<div class="gb" style="left:35px;top:159px;width:292px;height:42px;"></div>
<span class="t gt" style="left:42px;top:152px;letter-spacing:-0.414px;">Plc Start Up Running Mode</span>
<div class="rb" style="left:40px;top:174px;width:13px;height:13px;"></div>
<div style="left:43px;top:177px;width:7px;height:7px;background:#222;border-radius:50%;"></div>
<span class="t" style="left:59px;top:172.5px;letter-spacing:-0.396px;">Last Running Mode</span>
<div class="rb" style="left:163px;top:174px;width:13px;height:13px;"></div>
<span class="t" style="left:182px;top:172.5px;letter-spacing:-0.418px;">Stop</span>
<div class="rb" style="left:221px;top:174px;width:13px;height:13px;"></div>
<span class="t" style="left:240px;top:172.5px;letter-spacing:-0.406px;">Running</span>
<div class="gb" style="left:25px;top:223px;width:313px;height:81px;"></div>
<span class="t gt" style="left:32px;top:216px;letter-spacing:-0.467px;">Serial Port (Modbus Rtu) 0</span>
<div class="cb" style="left:40px;top:237px;width:13px;height:13px;"></div>
<svg style="left:40px;top:237px" width="13" height="13"><path d="M2.5 6.5l3 3 5.5-6.5" stroke="#222" stroke-width="1.2" fill="none"/></svg>
<span class="t" style="left:59px;top:235.5px;letter-spacing:-0.400px;">Activate Port</span>
<span class="t" style="left:41px;top:257px;letter-spacing:-0.431px;">Baudrate:</span>
<span class="t" style="left:135px;top:257px;letter-spacing:-0.513px;">Parity:</span>
<span class="t" style="left:225px;top:257px;letter-spacing:-0.422px;">Stop Bits:</span>
<span class="t" style="left:282px;top:257px;letter-spacing:-0.386px;">Data Bits:</span>
<div class="co" style="left:41px;top:274px;width:81px;height:21px;"></div>
<svg style="left:106px;top:274px" width="14" height="21"><path d="M2.5 8.3l4 4 4-4" stroke="#3c3c3c" stroke-width="1.1" fill="none"/></svg>
<span class="t" style="left:45px;top:277px;letter-spacing:-0.255px;">115200</span>
<div class="co" style="left:132px;top:274px;width:81px;height:21px;"></div>
<svg style="left:197px;top:274px" width="14" height="21"><path d="M2.5 8.3l4 4 4-4" stroke="#3c3c3c" stroke-width="1.1" fill="none"/></svg>
<span class="t" style="left:136px;top:277px;letter-spacing:-0.375px;">None</span>
<div class="co" style="left:223px;top:274px;width:47px;height:21px;"></div>
<svg style="left:254px;top:274px" width="14" height="21"><path d="M2.5 8.3l4 4 4-4" stroke="#3c3c3c" stroke-width="1.1" fill="none"/></svg>
<span class="t" style="left:227px;top:277px;letter-spacing:-0.406px;">1</span>
<div class="co" style="left:280px;top:274px;width:47px;height:21px;"></div>
<svg style="left:311px;top:274px" width="14" height="21"><path d="M2.5 8.3l4 4 4-4" stroke="#3c3c3c" stroke-width="1.1" fill="none"/></svg>
<span class="t" style="left:284px;top:277px;letter-spacing:-0.406px;">8</span>
<div class="gb" style="left:25px;top:316px;width:313px;height:81px;"></div>
<span class="t gt" style="left:32px;top:309px;letter-spacing:-0.467px;">Serial Port (Modbus Rtu) 1</span>
<div class="cb" style="left:40px;top:330px;width:13px;height:13px;"></div>
<svg style="left:40px;top:330px" width="13" height="13"><path d="M2.5 6.5l3 3 5.5-6.5" stroke="#222" stroke-width="1.2" fill="none"/></svg>
<span class="t" style="left:59px;top:328.5px;letter-spacing:-0.400px;">Activate Port</span>
<span class="t" style="left:41px;top:350px;letter-spacing:-0.431px;">Baudrate:</span>
<span class="t" style="left:135px;top:350px;letter-spacing:-0.513px;">Parity:</span>
<span class="t" style="left:225px;top:350px;letter-spacing:-0.422px;">Stop Bits:</span>
<span class="t" style="left:282px;top:350px;letter-spacing:-0.386px;">Data Bits:</span>
<div class="co" style="left:41px;top:367px;width:81px;height:21px;"></div>
<svg style="left:106px;top:367px" width="14" height="21"><path d="M2.5 8.3l4 4 4-4" stroke="#3c3c3c" stroke-width="1.1" fill="none"/></svg>
<span class="t" style="left:45px;top:370px;letter-spacing:-0.255px;">115200</span>
<div class="co" style="left:132px;top:367px;width:81px;height:21px;"></div>
<svg style="left:197px;top:367px" width="14" height="21"><path d="M2.5 8.3l4 4 4-4" stroke="#3c3c3c" stroke-width="1.1" fill="none"/></svg>
<span class="t" style="left:136px;top:370px;letter-spacing:-0.375px;">None</span>
<div class="co" style="left:223px;top:367px;width:47px;height:21px;"></div>
<svg style="left:254px;top:367px" width="14" height="21"><path d="M2.5 8.3l4 4 4-4" stroke="#3c3c3c" stroke-width="1.1" fill="none"/></svg>
<span class="t" style="left:227px;top:370px;letter-spacing:-0.406px;">1</span>
<div class="co" style="left:280px;top:367px;width:47px;height:21px;"></div>
<svg style="left:311px;top:367px" width="14" height="21"><path d="M2.5 8.3l4 4 4-4" stroke="#3c3c3c" stroke-width="1.1" fill="none"/></svg>
<span class="t" style="left:284px;top:370px;letter-spacing:-0.406px;">8</span>
<div class="gb" style="left:25px;top:410px;width:313px;height:157px;"></div>
<span class="t gt" style="left:32px;top:403px;letter-spacing:-0.626px;">Kesme Ayarları</span>
<span class="t" style="left:43px;top:429px;letter-spacing:-0.466px;">Time Based Interrupt Time(Ms.):</span>
<div style="left:275px;top:428px;width:53px;height:20px;background:#fff;border:1px solid #abadb3;"></div>
<div style="left:312px;top:430px;width:14px;height:8px;border:1px solid #c4c4c4;background:#f0f0f0;"></div>
<div style="left:312px;top:438px;width:14px;height:8px;border:1px solid #c4c4c4;background:#f0f0f0;"></div>
<svg style="left:312px;top:428px" width="14" height="20"><path d="M4.1 6.9L7 3.7L9.9 6.9z" fill="#000"/><path d="M4.2 12.5L7 15.6L9.8 12.5z" fill="#000"/></svg>
<span class="t" style="left:277px;top:429px;letter-spacing:-0.406px;">0</span>
<span class="t" style="left:43px;top:455px;letter-spacing:-0.471px;">Interrupt Control Flag Address:</span>
<div style="left:275px;top:454px;width:53px;height:20px;background:#fff;border:1px solid #abadb3;"></div>
<div style="left:312px;top:456px;width:14px;height:8px;border:1px solid #c4c4c4;background:#f0f0f0;"></div>
<div style="left:312px;top:464px;width:14px;height:8px;border:1px solid #c4c4c4;background:#f0f0f0;"></div>
<svg style="left:312px;top:454px" width="14" height="20"><path d="M4.1 6.9L7 3.7L9.9 6.9z" fill="#000"/><path d="M4.2 12.5L7 15.6L9.8 12.5z" fill="#000"/></svg>
<span class="t" style="left:277px;top:455px;letter-spacing:-0.406px;">0</span>
<span class="t" style="left:43px;top:480px;letter-spacing:-0.278px;">I 0.0</span>
<div class="tbd" style="left:41px;top:497px;width:54px;height:20px;"></div>
<span class="t g" style="left:41px;top:499px;width:54px;text-align:center;letter-spacing:-0.444px;">F 0.0</span>
<span class="t" style="left:43px;top:522px;letter-spacing:-0.278px;">I 0.4</span>
<div class="tbd" style="left:41px;top:539px;width:54px;height:20px;"></div>
<span class="t g" style="left:41px;top:541px;width:54px;text-align:center;letter-spacing:-0.444px;">F 0.0</span>
<span class="t" style="left:120px;top:480px;letter-spacing:-0.278px;">I 0.1</span>
<div class="tbd" style="left:118px;top:497px;width:54px;height:20px;"></div>
<span class="t g" style="left:118px;top:499px;width:54px;text-align:center;letter-spacing:-0.444px;">F 0.0</span>
<span class="t" style="left:120px;top:522px;letter-spacing:-0.278px;">I 0.5</span>
<div class="tbd" style="left:118px;top:539px;width:54px;height:20px;"></div>
<span class="t g" style="left:118px;top:541px;width:54px;text-align:center;letter-spacing:-0.444px;">F 0.0</span>
<span class="t" style="left:198px;top:480px;letter-spacing:-0.278px;">I 0.2</span>
<div class="tbd" style="left:196px;top:497px;width:54px;height:20px;"></div>
<span class="t g" style="left:196px;top:499px;width:54px;text-align:center;letter-spacing:-0.444px;">F 0.0</span>
<span class="t" style="left:198px;top:522px;letter-spacing:-0.278px;">I 0.6</span>
<div class="tbd" style="left:196px;top:539px;width:54px;height:20px;"></div>
<span class="t g" style="left:196px;top:541px;width:54px;text-align:center;letter-spacing:-0.444px;">F 0.0</span>
<span class="t" style="left:275px;top:480px;letter-spacing:-0.278px;">I 0.3</span>
<div class="tbd" style="left:273px;top:497px;width:54px;height:20px;"></div>
<span class="t g" style="left:273px;top:499px;width:54px;text-align:center;letter-spacing:-0.444px;">F 0.0</span>
<span class="t" style="left:275px;top:522px;letter-spacing:-0.494px;">Time Based</span>
<div class="tbd" style="left:273px;top:539px;width:54px;height:20px;"></div>
<span class="t g" style="left:273px;top:541px;width:54px;text-align:center;letter-spacing:-0.444px;">F 0.0</span>
<div class="gb" style="left:344px;top:72px;width:313px;height:495px;"></div>
<span class="t gt" style="left:351px;top:65px;letter-spacing:-0.372px;">Ethernet (Modbus Tcp/Ip)</span>
<div class="cb" style="left:365px;top:88px;width:13px;height:13px;"></div>
<svg style="left:365px;top:88px" width="13" height="13"><path d="M2.5 6.5l3 3 5.5-6.5" stroke="#222" stroke-width="1.2" fill="none"/></svg>
<span class="t" style="left:384px;top:86.5px;letter-spacing:-0.387px;">Activate Ethernet</span>
<span class="t" style="left:358px;top:110px;letter-spacing:-0.472px;">Host Name:</span>
<div class="tb" style="left:358px;top:127px;width:121px;height:20px;"></div>
<span class="t" style="left:361px;top:129px;letter-spacing:-0.641px;">SPEED_PLC</span>
<div class="gb" style="left:357px;top:161px;width:284px;height:168px;"></div>
<span class="t gt" style="left:364px;top:154px;letter-spacing:-0.648px;">DHCP</span>
<div class="cb" style="left:368px;top:174px;width:13px;height:13px;"></div>
<span class="t" style="left:387px;top:172.5px;letter-spacing:-0.438px;">Activate DHCP</span>
<span class="t" style="left:368px;top:193px;letter-spacing:-0.244px;">IPv4:</span>
<div style="left:449px;top:192px;width:42px;height:20px;background:#fff;border:1px solid #abadb3;"></div>
<div style="left:475px;top:194px;width:14px;height:8px;border:1px solid #c4c4c4;background:#f0f0f0;"></div>
<div style="left:475px;top:202px;width:14px;height:8px;border:1px solid #c4c4c4;background:#f0f0f0;"></div>
<svg style="left:475px;top:192px" width="14" height="20"><path d="M4.1 6.9L7 3.7L9.9 6.9z" fill="#000"/><path d="M4.2 12.5L7 15.6L9.8 12.5z" fill="#000"/></svg>
<span class="t" style="left:451px;top:193px;letter-spacing:-0.396px;">192</span>
<div style="left:497px;top:192px;width:42px;height:20px;background:#fff;border:1px solid #abadb3;"></div>
<div style="left:523px;top:194px;width:14px;height:8px;border:1px solid #c4c4c4;background:#f0f0f0;"></div>
<div style="left:523px;top:202px;width:14px;height:8px;border:1px solid #c4c4c4;background:#f0f0f0;"></div>
<svg style="left:523px;top:192px" width="14" height="20"><path d="M4.1 6.9L7 3.7L9.9 6.9z" fill="#000"/><path d="M4.2 12.5L7 15.6L9.8 12.5z" fill="#000"/></svg>
<span class="t" style="left:499px;top:193px;letter-spacing:-0.396px;">168</span>
<div style="left:545px;top:192px;width:42px;height:20px;background:#fff;border:1px solid #abadb3;"></div>
<div style="left:571px;top:194px;width:14px;height:8px;border:1px solid #c4c4c4;background:#f0f0f0;"></div>
<div style="left:571px;top:202px;width:14px;height:8px;border:1px solid #c4c4c4;background:#f0f0f0;"></div>
<svg style="left:571px;top:192px" width="14" height="20"><path d="M4.1 6.9L7 3.7L9.9 6.9z" fill="#000"/><path d="M4.2 12.5L7 15.6L9.8 12.5z" fill="#000"/></svg>
<span class="t" style="left:547px;top:193px;letter-spacing:-0.406px;">0</span>
<div style="left:593px;top:192px;width:42px;height:20px;background:#fff;border:1px solid #abadb3;"></div>
<div style="left:619px;top:194px;width:14px;height:8px;border:1px solid #c4c4c4;background:#f0f0f0;"></div>
<div style="left:619px;top:202px;width:14px;height:8px;border:1px solid #c4c4c4;background:#f0f0f0;"></div>
<svg style="left:619px;top:192px" width="14" height="20"><path d="M4.1 6.9L7 3.7L9.9 6.9z" fill="#000"/><path d="M4.2 12.5L7 15.6L9.8 12.5z" fill="#000"/></svg>
<span class="t" style="left:595px;top:193px;letter-spacing:-0.398px;">10</span>
<span class="t" style="left:368px;top:220px;letter-spacing:-0.316px;">IP Mask:</span>
<div style="left:449px;top:219px;width:42px;height:20px;background:#fff;border:1px solid #abadb3;"></div>
<div style="left:475px;top:221px;width:14px;height:8px;border:1px solid #c4c4c4;background:#f0f0f0;"></div>
<div style="left:475px;top:229px;width:14px;height:8px;border:1px solid #c4c4c4;background:#f0f0f0;"></div>
<svg style="left:475px;top:219px" width="14" height="20"><path d="M4.1 6.9L7 3.7L9.9 6.9z" fill="#000"/><path d="M4.2 12.5L7 15.6L9.8 12.5z" fill="#000"/></svg>
<span class="t" style="left:451px;top:220px;letter-spacing:-0.396px;">255</span>
<div style="left:497px;top:219px;width:42px;height:20px;background:#fff;border:1px solid #abadb3;"></div>
<div style="left:523px;top:221px;width:14px;height:8px;border:1px solid #c4c4c4;background:#f0f0f0;"></div>
<div style="left:523px;top:229px;width:14px;height:8px;border:1px solid #c4c4c4;background:#f0f0f0;"></div>
<svg style="left:523px;top:219px" width="14" height="20"><path d="M4.1 6.9L7 3.7L9.9 6.9z" fill="#000"/><path d="M4.2 12.5L7 15.6L9.8 12.5z" fill="#000"/></svg>
<span class="t" style="left:499px;top:220px;letter-spacing:-0.396px;">255</span>
<div style="left:545px;top:219px;width:42px;height:20px;background:#fff;border:1px solid #abadb3;"></div>
<div style="left:571px;top:221px;width:14px;height:8px;border:1px solid #c4c4c4;background:#f0f0f0;"></div>
<div style="left:571px;top:229px;width:14px;height:8px;border:1px solid #c4c4c4;background:#f0f0f0;"></div>
<svg style="left:571px;top:219px" width="14" height="20"><path d="M4.1 6.9L7 3.7L9.9 6.9z" fill="#000"/><path d="M4.2 12.5L7 15.6L9.8 12.5z" fill="#000"/></svg>
<span class="t" style="left:547px;top:220px;letter-spacing:-0.396px;">255</span>
<div style="left:593px;top:219px;width:42px;height:20px;background:#fff;border:1px solid #abadb3;"></div>
<div style="left:619px;top:221px;width:14px;height:8px;border:1px solid #c4c4c4;background:#f0f0f0;"></div>
<div style="left:619px;top:229px;width:14px;height:8px;border:1px solid #c4c4c4;background:#f0f0f0;"></div>
<svg style="left:619px;top:219px" width="14" height="20"><path d="M4.1 6.9L7 3.7L9.9 6.9z" fill="#000"/><path d="M4.2 12.5L7 15.6L9.8 12.5z" fill="#000"/></svg>
<span class="t" style="left:595px;top:220px;letter-spacing:-0.406px;">0</span>
<span class="t" style="left:368px;top:247px;letter-spacing:-0.473px;">Gateaway</span>
<div style="left:449px;top:246px;width:42px;height:20px;background:#fff;border:1px solid #abadb3;"></div>
<div style="left:475px;top:248px;width:14px;height:8px;border:1px solid #c4c4c4;background:#f0f0f0;"></div>
<div style="left:475px;top:256px;width:14px;height:8px;border:1px solid #c4c4c4;background:#f0f0f0;"></div>
<svg style="left:475px;top:246px" width="14" height="20"><path d="M4.1 6.9L7 3.7L9.9 6.9z" fill="#000"/><path d="M4.2 12.5L7 15.6L9.8 12.5z" fill="#000"/></svg>
<span class="t" style="left:451px;top:247px;letter-spacing:-0.396px;">192</span>
<div style="left:497px;top:246px;width:42px;height:20px;background:#fff;border:1px solid #abadb3;"></div>
<div style="left:523px;top:248px;width:14px;height:8px;border:1px solid #c4c4c4;background:#f0f0f0;"></div>
<div style="left:523px;top:256px;width:14px;height:8px;border:1px solid #c4c4c4;background:#f0f0f0;"></div>
<svg style="left:523px;top:246px" width="14" height="20"><path d="M4.1 6.9L7 3.7L9.9 6.9z" fill="#000"/><path d="M4.2 12.5L7 15.6L9.8 12.5z" fill="#000"/></svg>
<span class="t" style="left:499px;top:247px;letter-spacing:-0.396px;">168</span>
<div style="left:545px;top:246px;width:42px;height:20px;background:#fff;border:1px solid #abadb3;"></div>
<div style="left:571px;top:248px;width:14px;height:8px;border:1px solid #c4c4c4;background:#f0f0f0;"></div>
<div style="left:571px;top:256px;width:14px;height:8px;border:1px solid #c4c4c4;background:#f0f0f0;"></div>
<svg style="left:571px;top:246px" width="14" height="20"><path d="M4.1 6.9L7 3.7L9.9 6.9z" fill="#000"/><path d="M4.2 12.5L7 15.6L9.8 12.5z" fill="#000"/></svg>
<span class="t" style="left:547px;top:247px;letter-spacing:-0.406px;">0</span>
<div style="left:593px;top:246px;width:42px;height:20px;background:#fff;border:1px solid #abadb3;"></div>
<div style="left:619px;top:248px;width:14px;height:8px;border:1px solid #c4c4c4;background:#f0f0f0;"></div>
<div style="left:619px;top:256px;width:14px;height:8px;border:1px solid #c4c4c4;background:#f0f0f0;"></div>
<svg style="left:619px;top:246px" width="14" height="20"><path d="M4.1 6.9L7 3.7L9.9 6.9z" fill="#000"/><path d="M4.2 12.5L7 15.6L9.8 12.5z" fill="#000"/></svg>
<span class="t" style="left:595px;top:247px;letter-spacing:-0.406px;">1</span>
<span class="t" style="left:368px;top:274px;letter-spacing:-0.607px;">Primary DNS:</span>
<div style="left:449px;top:273px;width:42px;height:20px;background:#fff;border:1px solid #abadb3;"></div>
<div style="left:475px;top:275px;width:14px;height:8px;border:1px solid #c4c4c4;background:#f0f0f0;"></div>
<div style="left:475px;top:283px;width:14px;height:8px;border:1px solid #c4c4c4;background:#f0f0f0;"></div>
<svg style="left:475px;top:273px" width="14" height="20"><path d="M4.1 6.9L7 3.7L9.9 6.9z" fill="#000"/><path d="M4.2 12.5L7 15.6L9.8 12.5z" fill="#000"/></svg>
<span class="t" style="left:451px;top:274px;letter-spacing:-0.396px;">192</span>
<div style="left:497px;top:273px;width:42px;height:20px;background:#fff;border:1px solid #abadb3;"></div>
<div style="left:523px;top:275px;width:14px;height:8px;border:1px solid #c4c4c4;background:#f0f0f0;"></div>
<div style="left:523px;top:283px;width:14px;height:8px;border:1px solid #c4c4c4;background:#f0f0f0;"></div>
<svg style="left:523px;top:273px" width="14" height="20"><path d="M4.1 6.9L7 3.7L9.9 6.9z" fill="#000"/><path d="M4.2 12.5L7 15.6L9.8 12.5z" fill="#000"/></svg>
<span class="t" style="left:499px;top:274px;letter-spacing:-0.396px;">168</span>
<div style="left:545px;top:273px;width:42px;height:20px;background:#fff;border:1px solid #abadb3;"></div>
<div style="left:571px;top:275px;width:14px;height:8px;border:1px solid #c4c4c4;background:#f0f0f0;"></div>
<div style="left:571px;top:283px;width:14px;height:8px;border:1px solid #c4c4c4;background:#f0f0f0;"></div>
<svg style="left:571px;top:273px" width="14" height="20"><path d="M4.1 6.9L7 3.7L9.9 6.9z" fill="#000"/><path d="M4.2 12.5L7 15.6L9.8 12.5z" fill="#000"/></svg>
<span class="t" style="left:547px;top:274px;letter-spacing:-0.406px;">0</span>
<div style="left:593px;top:273px;width:42px;height:20px;background:#fff;border:1px solid #abadb3;"></div>
<div style="left:619px;top:275px;width:14px;height:8px;border:1px solid #c4c4c4;background:#f0f0f0;"></div>
<div style="left:619px;top:283px;width:14px;height:8px;border:1px solid #c4c4c4;background:#f0f0f0;"></div>
<svg style="left:619px;top:273px" width="14" height="20"><path d="M4.1 6.9L7 3.7L9.9 6.9z" fill="#000"/><path d="M4.2 12.5L7 15.6L9.8 12.5z" fill="#000"/></svg>
<span class="t" style="left:595px;top:274px;letter-spacing:-0.406px;">1</span>
<span class="t" style="left:368px;top:301px;letter-spacing:-0.475px;">Secondery DNS:</span>
<div style="left:449px;top:300px;width:42px;height:20px;background:#fff;border:1px solid #abadb3;"></div>
<div style="left:475px;top:302px;width:14px;height:8px;border:1px solid #c4c4c4;background:#f0f0f0;"></div>
<div style="left:475px;top:310px;width:14px;height:8px;border:1px solid #c4c4c4;background:#f0f0f0;"></div>
<svg style="left:475px;top:300px" width="14" height="20"><path d="M4.1 6.9L7 3.7L9.9 6.9z" fill="#000"/><path d="M4.2 12.5L7 15.6L9.8 12.5z" fill="#000"/></svg>
<span class="t" style="left:451px;top:301px;letter-spacing:-0.406px;">0</span>
<div style="left:497px;top:300px;width:42px;height:20px;background:#fff;border:1px solid #abadb3;"></div>
<div style="left:523px;top:302px;width:14px;height:8px;border:1px solid #c4c4c4;background:#f0f0f0;"></div>
<div style="left:523px;top:310px;width:14px;height:8px;border:1px solid #c4c4c4;background:#f0f0f0;"></div>
<svg style="left:523px;top:300px" width="14" height="20"><path d="M4.1 6.9L7 3.7L9.9 6.9z" fill="#000"/><path d="M4.2 12.5L7 15.6L9.8 12.5z" fill="#000"/></svg>
<span class="t" style="left:499px;top:301px;letter-spacing:-0.406px;">0</span>
<div style="left:545px;top:300px;width:42px;height:20px;background:#fff;border:1px solid #abadb3;"></div>
<div style="left:571px;top:302px;width:14px;height:8px;border:1px solid #c4c4c4;background:#f0f0f0;"></div>
<div style="left:571px;top:310px;width:14px;height:8px;border:1px solid #c4c4c4;background:#f0f0f0;"></div>
<svg style="left:571px;top:300px" width="14" height="20"><path d="M4.1 6.9L7 3.7L9.9 6.9z" fill="#000"/><path d="M4.2 12.5L7 15.6L9.8 12.5z" fill="#000"/></svg>
<span class="t" style="left:547px;top:301px;letter-spacing:-0.406px;">0</span>
<div style="left:593px;top:300px;width:42px;height:20px;background:#fff;border:1px solid #abadb3;"></div>
<div style="left:619px;top:302px;width:14px;height:8px;border:1px solid #c4c4c4;background:#f0f0f0;"></div>
<div style="left:619px;top:310px;width:14px;height:8px;border:1px solid #c4c4c4;background:#f0f0f0;"></div>
<svg style="left:619px;top:300px" width="14" height="20"><path d="M4.1 6.9L7 3.7L9.9 6.9z" fill="#000"/><path d="M4.2 12.5L7 15.6L9.8 12.5z" fill="#000"/></svg>
<span class="t" style="left:595px;top:301px;letter-spacing:-0.406px;">0</span>
<div class="gb" style="left:357px;top:342px;width:284px;height:68px;"></div>
<span class="t gt" style="left:364px;top:335px;letter-spacing:-0.486px;">TCP Server</span>
<div class="cb" style="left:367px;top:356px;width:13px;height:13px;"></div>
<svg style="left:367px;top:356px" width="13" height="13"><path d="M2.5 6.5l3 3 5.5-6.5" stroke="#222" stroke-width="1.2" fill="none"/></svg>
<span class="t" style="left:386px;top:354.5px;letter-spacing:-0.409px;">Activate TCP Server</span>
<span class="t" style="left:367px;top:376px;letter-spacing:-0.398px;">Port No:</span>
<div style="left:425px;top:376px;width:52px;height:20px;background:#fff;border:1px solid #abadb3;"></div>
<div style="left:461px;top:378px;width:14px;height:8px;border:1px solid #c4c4c4;background:#f0f0f0;"></div>
<div style="left:461px;top:386px;width:14px;height:8px;border:1px solid #c4c4c4;background:#f0f0f0;"></div>
<svg style="left:461px;top:376px" width="14" height="20"><path d="M4.1 6.9L7 3.7L9.9 6.9z" fill="#000"/><path d="M4.2 12.5L7 15.6L9.8 12.5z" fill="#000"/></svg>
<span class="t" style="left:427px;top:377px;letter-spacing:-0.396px;">502</span>
<span class="t" style="left:489px;top:376px;letter-spacing:-0.499px;">Timeout (Sec):</span>
<div style="left:582px;top:376px;width:52px;height:20px;background:#fff;border:1px solid #abadb3;"></div>
<div style="left:618px;top:378px;width:14px;height:8px;border:1px solid #c4c4c4;background:#f0f0f0;"></div>
<div style="left:618px;top:386px;width:14px;height:8px;border:1px solid #c4c4c4;background:#f0f0f0;"></div>
<svg style="left:618px;top:376px" width="14" height="20"><path d="M4.1 6.9L7 3.7L9.9 6.9z" fill="#000"/><path d="M4.2 12.5L7 15.6L9.8 12.5z" fill="#000"/></svg>
<span class="t" style="left:584px;top:377px;letter-spacing:-0.398px;">10</span>
<div class="gb" style="left:357px;top:423px;width:284px;height:135px;"></div>
<span class="t gt" style="left:364px;top:416px;letter-spacing:-0.427px;">WEB Server</span>
<div class="cb" style="left:367px;top:437px;width:13px;height:13px;"></div>
<svg style="left:367px;top:437px" width="13" height="13"><path d="M2.5 6.5l3 3 5.5-6.5" stroke="#222" stroke-width="1.2" fill="none"/></svg>
<span class="t" style="left:386px;top:435.5px;letter-spacing:-0.388px;">Activate WEB Server</span>
<span class="t" style="left:502px;top:436px;letter-spacing:-0.228px;">Type:</span>
<div class="co" style="left:539px;top:432px;width:96px;height:21px;"></div>
<svg style="left:619px;top:432px" width="14" height="21"><path d="M2.5 8.3l4 4 4-4" stroke="#3c3c3c" stroke-width="1.1" fill="none"/></svg>
<span class="t" style="left:543px;top:435px;letter-spacing:-0.396px;">SRWNA Syster</span>
<span class="t" style="left:367px;top:458px;letter-spacing:-0.398px;">Port No:</span>
<div style="left:425px;top:457px;width:52px;height:20px;background:#fff;border:1px solid #abadb3;"></div>
<div style="left:461px;top:459px;width:14px;height:8px;border:1px solid #c4c4c4;background:#f0f0f0;"></div>
<div style="left:461px;top:467px;width:14px;height:8px;border:1px solid #c4c4c4;background:#f0f0f0;"></div>
<svg style="left:461px;top:457px" width="14" height="20"><path d="M4.1 6.9L7 3.7L9.9 6.9z" fill="#000"/><path d="M4.2 12.5L7 15.6L9.8 12.5z" fill="#000"/></svg>
<span class="t" style="left:427px;top:458px;letter-spacing:-0.398px;">80</span>
<span class="t" style="left:489px;top:458px;letter-spacing:-0.499px;">Timeout (Sec):</span>
<div style="left:582px;top:457px;width:52px;height:20px;background:#fff;border:1px solid #abadb3;"></div>
<div style="left:618px;top:459px;width:14px;height:8px;border:1px solid #c4c4c4;background:#f0f0f0;"></div>
<div style="left:618px;top:467px;width:14px;height:8px;border:1px solid #c4c4c4;background:#f0f0f0;"></div>
<svg style="left:618px;top:457px" width="14" height="20"><path d="M4.1 6.9L7 3.7L9.9 6.9z" fill="#000"/><path d="M4.2 12.5L7 15.6L9.8 12.5z" fill="#000"/></svg>
<span class="t" style="left:584px;top:458px;letter-spacing:-0.398px;">30</span>
<span class="t" style="left:367px;top:479.5px;letter-spacing:-0.536px;">User Name:</span>
<span class="t" style="left:514px;top:479.5px;letter-spacing:-0.521px;">Password:</span>
<div class="tb" style="left:367px;top:499px;width:120px;height:20px;"></div>
<span class="t" style="left:370px;top:501px;letter-spacing:-0.641px;">SPEED_PLC</span>
<div class="tb" style="left:514px;top:499px;width:120px;height:20px;"></div>
<span class="t" style="left:517px;top:501px;letter-spacing:-0.396px;">123</span>
<div class="bt" style="left:369px;top:526px;width:78px;height:21px;line-height:19px;"><span class="t" style="position:relative;top:1px;left:-1px;letter-spacing:-0.409px;">Upload</span></div>
<div class="bt" style="left:463px;top:526px;width:78px;height:21px;line-height:19px;"><span class="t" style="position:relative;top:1px;left:-1px;letter-spacing:-0.395px;">Download</span></div>
<div class="bt" style="left:555px;top:526px;width:78px;height:21px;line-height:19px;"><span class="t" style="position:relative;top:1px;left:-1px;letter-spacing:-0.375px;">Delete</span></div>
<div style="left:660px;top:66px;width:339px;height:503px;overflow:hidden;">
<div class="gb" style="left:4px;top:6px;width:313px;height:63px;"></div>
<span class="t gt" style="left:11px;top:-1px;letter-spacing:-0.414px;">Digital Inputs and Outputs Address</span>
<span class="t" style="left:17px;top:19px;letter-spacing:-0.419px;">Inputs Address:</span>
<div style="left:194px;top:15px;width:53px;height:20px;background:#fff;border:1px solid #abadb3;"></div>
<div style="left:231px;top:17px;width:14px;height:8px;border:1px solid #c4c4c4;background:#f0f0f0;"></div>
<div style="left:231px;top:25px;width:14px;height:8px;border:1px solid #c4c4c4;background:#f0f0f0;"></div>
<svg style="left:231px;top:15px" width="14" height="20"><path d="M4.1 6.9L7 3.7L9.9 6.9z" fill="#000"/><path d="M4.2 12.5L7 15.6L9.8 12.5z" fill="#000"/></svg>
<span class="t" style="left:196px;top:16px;letter-spacing:-0.406px;">0</span>
<div style="left:253px;top:15px;width:53px;height:20px;background:#f0f0f0;border:1px solid #bcbdc1;"></div>
<div style="left:290px;top:17px;width:14px;height:8px;border:1px solid #e2e2e2;background:#f0f0f0;"></div>
<div style="left:290px;top:25px;width:14px;height:8px;border:1px solid #e2e2e2;background:#f0f0f0;"></div>
<svg style="left:290px;top:15px" width="14" height="20"><path d="M4.1 6.9L7 3.7L9.9 6.9z" fill="#a6a6a6"/><path d="M4.2 12.5L7 15.6L9.8 12.5z" fill="#a6a6a6"/></svg>
<span class="t" style="left:255px;top:16px;color:#6d6d6d;letter-spacing:-0.406px;">0</span>
<span class="t" style="left:17px;top:44px;letter-spacing:-0.469px;">Outputs Address</span>
<div style="left:194px;top:40px;width:53px;height:20px;background:#fff;border:1px solid #abadb3;"></div>
<div style="left:231px;top:42px;width:14px;height:8px;border:1px solid #c4c4c4;background:#f0f0f0;"></div>
<div style="left:231px;top:50px;width:14px;height:8px;border:1px solid #c4c4c4;background:#f0f0f0;"></div>
<svg style="left:231px;top:40px" width="14" height="20"><path d="M4.1 6.9L7 3.7L9.9 6.9z" fill="#000"/><path d="M4.2 12.5L7 15.6L9.8 12.5z" fill="#000"/></svg>
<span class="t" style="left:196px;top:41px;letter-spacing:-0.406px;">0</span>
<div style="left:253px;top:40px;width:53px;height:20px;background:#f0f0f0;border:1px solid #bcbdc1;"></div>
<div style="left:290px;top:42px;width:14px;height:8px;border:1px solid #e2e2e2;background:#f0f0f0;"></div>
<div style="left:290px;top:50px;width:14px;height:8px;border:1px solid #e2e2e2;background:#f0f0f0;"></div>
<svg style="left:290px;top:40px" width="14" height="20"><path d="M4.1 6.9L7 3.7L9.9 6.9z" fill="#a6a6a6"/><path d="M4.2 12.5L7 15.6L9.8 12.5z" fill="#a6a6a6"/></svg>
<span class="t" style="left:255px;top:41px;color:#6d6d6d;letter-spacing:-0.406px;">0</span>
<div class="gb" style="left:5px;top:82px;width:313px;height:351px;"></div>
<span class="t gt" style="left:12px;top:75px;letter-spacing:-0.392px;">Digital Inputs</span>
<span class="t" style="left:14px;top:93px;letter-spacing:-0.367px;">0.Channel Inputs Type:</span>
<span class="t" style="left:185px;top:93px;letter-spacing:-0.459px;">Bool Address:</span>
<span class="t" style="left:254px;top:93px;letter-spacing:-0.248px;">Word Adr.:</span>
<div class="co" style="left:14px;top:110px;width:154px;height:21px;background:#cce4f7;border:1px solid #0078d7;"></div>
<svg style="left:152px;top:110px" width="14" height="21"><path d="M2.5 8.3l4 4 4-4" stroke="#3c3c3c" stroke-width="1.1" fill="none"/></svg>
<span class="t" style="left:18px;top:113px;letter-spacing:-0.364px;">Digital Input</span>
<div class="tbd" style="left:185px;top:110px;width:53px;height:20px;"></div>
<span class="t g" style="left:188px;top:112px;letter-spacing:-0.278px;">I 0.0</span>
<div class="tbd" style="left:254px;top:110px;width:53px;height:20px;"></div>
<span class="t" style="left:14px;top:135px;letter-spacing:-0.367px;">1.Channel Inputs Type:</span>
<span class="t" style="left:185px;top:135px;letter-spacing:-0.459px;">Bool Address:</span>
<span class="t" style="left:254px;top:135px;letter-spacing:-0.248px;">Word Adr.:</span>
<div class="co" style="left:14px;top:152px;width:154px;height:21px;"></div>
<svg style="left:152px;top:152px" width="14" height="21"><path d="M2.5 8.3l4 4 4-4" stroke="#3c3c3c" stroke-width="1.1" fill="none"/></svg>
<span class="t" style="left:18px;top:155px;letter-spacing:-0.364px;">Digital Input</span>
<div class="tbd" style="left:185px;top:152px;width:53px;height:20px;"></div>
<span class="t g" style="left:188px;top:154px;letter-spacing:-0.278px;">I 0.1</span>
<div class="tbd" style="left:254px;top:152px;width:53px;height:20px;"></div>
<span class="t" style="left:14px;top:177px;letter-spacing:-0.367px;">2.Channel Inputs Type:</span>
<span class="t" style="left:185px;top:177px;letter-spacing:-0.459px;">Bool Address:</span>
<span class="t" style="left:254px;top:177px;letter-spacing:-0.248px;">Word Adr.:</span>
<div class="co" style="left:14px;top:194px;width:154px;height:21px;"></div>
<svg style="left:152px;top:194px" width="14" height="21"><path d="M2.5 8.3l4 4 4-4" stroke="#3c3c3c" stroke-width="1.1" fill="none"/></svg>
<span class="t" style="left:18px;top:197px;letter-spacing:-0.364px;">Digital Input</span>
<div class="tbd" style="left:185px;top:194px;width:53px;height:20px;"></div>
<span class="t g" style="left:188px;top:196px;letter-spacing:-0.278px;">I 0.2</span>
<div class="tbd" style="left:254px;top:194px;width:53px;height:20px;"></div>
<span class="t" style="left:14px;top:219px;letter-spacing:-0.367px;">3.Channel Inputs Type:</span>
<span class="t" style="left:185px;top:219px;letter-spacing:-0.459px;">Bool Address:</span>
<span class="t" style="left:254px;top:219px;letter-spacing:-0.248px;">Word Adr.:</span>
<div class="co" style="left:14px;top:236px;width:154px;height:21px;"></div>
<svg style="left:152px;top:236px" width="14" height="21"><path d="M2.5 8.3l4 4 4-4" stroke="#3c3c3c" stroke-width="1.1" fill="none"/></svg>
<span class="t" style="left:18px;top:239px;letter-spacing:-0.364px;">Digital Input</span>
<div class="tbd" style="left:185px;top:236px;width:53px;height:20px;"></div>
<span class="t g" style="left:188px;top:238px;letter-spacing:-0.278px;">I 0.3</span>
<div class="tbd" style="left:254px;top:236px;width:53px;height:20px;"></div>
<span class="t" style="left:14px;top:261px;letter-spacing:-0.367px;">4.Channel Inputs Type:</span>
<span class="t" style="left:185px;top:261px;letter-spacing:-0.459px;">Bool Address:</span>
<span class="t" style="left:254px;top:261px;letter-spacing:-0.248px;">Word Adr.:</span>
<div class="co" style="left:14px;top:278px;width:154px;height:21px;"></div>
<svg style="left:152px;top:278px" width="14" height="21"><path d="M2.5 8.3l4 4 4-4" stroke="#3c3c3c" stroke-width="1.1" fill="none"/></svg>
<span class="t" style="left:18px;top:281px;letter-spacing:-0.364px;">Digital Input</span>
<div class="tbd" style="left:185px;top:278px;width:53px;height:20px;"></div>
<span class="t g" style="left:188px;top:280px;letter-spacing:-0.278px;">I 0.4</span>
<div class="tbd" style="left:254px;top:278px;width:53px;height:20px;"></div>
<span class="t" style="left:14px;top:303px;letter-spacing:-0.367px;">5.Channel Inputs Type:</span>
<span class="t" style="left:185px;top:303px;letter-spacing:-0.459px;">Bool Address:</span>
<span class="t" style="left:254px;top:303px;letter-spacing:-0.248px;">Word Adr.:</span>
<div class="co" style="left:14px;top:320px;width:154px;height:21px;"></div>
<svg style="left:152px;top:320px" width="14" height="21"><path d="M2.5 8.3l4 4 4-4" stroke="#3c3c3c" stroke-width="1.1" fill="none"/></svg>
<span class="t" style="left:18px;top:323px;letter-spacing:-0.364px;">Digital Input</span>
<div class="tbd" style="left:185px;top:320px;width:53px;height:20px;"></div>
<span class="t g" style="left:188px;top:322px;letter-spacing:-0.278px;">I 0.5</span>
<div class="tbd" style="left:254px;top:320px;width:53px;height:20px;"></div>
<span class="t" style="left:14px;top:345px;letter-spacing:-0.367px;">6.Channel Inputs Type:</span>
<span class="t" style="left:185px;top:345px;letter-spacing:-0.459px;">Bool Address:</span>
<span class="t" style="left:254px;top:345px;letter-spacing:-0.248px;">Word Adr.:</span>
<div class="co" style="left:14px;top:362px;width:154px;height:21px;"></div>
<svg style="left:152px;top:362px" width="14" height="21"><path d="M2.5 8.3l4 4 4-4" stroke="#3c3c3c" stroke-width="1.1" fill="none"/></svg>
<span class="t" style="left:18px;top:365px;letter-spacing:-0.364px;">Digital Input</span>
<div class="tbd" style="left:185px;top:362px;width:53px;height:20px;"></div>
<span class="t g" style="left:188px;top:364px;letter-spacing:-0.278px;">I 0.6</span>
<div class="tbd" style="left:254px;top:362px;width:53px;height:20px;"></div>
<span class="t" style="left:14px;top:387px;letter-spacing:-0.367px;">7.Channel Inputs Type:</span>
<span class="t" style="left:185px;top:387px;letter-spacing:-0.459px;">Bool Address:</span>
<span class="t" style="left:254px;top:387px;letter-spacing:-0.248px;">Word Adr.:</span>
<div class="co" style="left:14px;top:404px;width:154px;height:21px;"></div>
<svg style="left:152px;top:404px" width="14" height="21"><path d="M2.5 8.3l4 4 4-4" stroke="#3c3c3c" stroke-width="1.1" fill="none"/></svg>
<span class="t" style="left:18px;top:407px;letter-spacing:-0.364px;">Digital Input</span>
<div class="tbd" style="left:185px;top:404px;width:53px;height:20px;"></div>
<span class="t g" style="left:188px;top:406px;letter-spacing:-0.278px;">I 0.7</span>
<div class="tbd" style="left:254px;top:404px;width:53px;height:20px;"></div>
<div class="gb" style="left:4px;top:446px;width:313px;height:82px;"></div>
<span class="t gt" style="left:11px;top:439px;letter-spacing:-0.429px;">Digital Outputs</span>
<span class="t" style="left:13px;top:456px;letter-spacing:-0.370px;">0.Channel Type:</span>
<span class="t" style="left:116px;top:456px;letter-spacing:-0.594px;">Frequency</span>
<span class="t" style="left:184px;top:456px;letter-spacing:-0.459px;">Bool Address:</span>
<span class="t" style="left:253px;top:456px;letter-spacing:-0.248px;">Word Adr.:</span>
<div class="co" style="left:13px;top:474px;width:91px;height:21px;"></div>
<svg style="left:88px;top:474px" width="14" height="21"><path d="M2.5 8.3l4 4 4-4" stroke="#3c3c3c" stroke-width="1.1" fill="none"/></svg>
<span class="t" style="left:17px;top:477px;letter-spacing:-0.406px;">Digital Output</span>
<div class="tbd" style="left:116px;top:474px;width:53px;height:20px;"></div>
<div class="tbd" style="left:184px;top:474px;width:53px;height:20px;"></div>
<span class="t g" style="left:187px;top:476px;letter-spacing:-0.428px;">Q 0.0</span>
<div class="tbd" style="left:253px;top:474px;width:53px;height:20px;"></div>
<span class="t" style="left:13px;top:498px;letter-spacing:-0.370px;">1.Channel Type:</span>
<span class="t" style="left:116px;top:498px;letter-spacing:-0.594px;">Frequency</span>
<span class="t" style="left:184px;top:498px;letter-spacing:-0.459px;">Bool Address:</span>
<span class="t" style="left:253px;top:498px;letter-spacing:-0.248px;">Word Adr.:</span>
<div style="left:322px;top:0px;width:16px;height:504px;background:#f0f0f0;"></div>
<div style="left:322px;top:17px;width:15px;height:200px;background:#cdcdcd;"></div>
<svg style="left:322px;top:0px" width="16" height="504"><path d="M4.3 11.6l3.6-3.6 3.6 3.6" stroke="#555" stroke-width="2" fill="none"/><path d="M4.3 492l3.6 3.6 3.6-3.6" stroke="#555" stroke-width="2" fill="none"/></svg>
</div>
<div style="left:674px;top:196px;width:200px;height:211px;background:#fff;border:1px solid #0078d7;box-shadow:2px 3px 4px rgba(0,0,0,.42);"></div>
<div style="left:675px;top:197px;width:198px;height:14px;background:#3399ff;"></div>
<span class="t" style="left:676.5999999999999px;top:196.5px;color:#fff;letter-spacing:-0.364px;">Digital Input</span>
<span class="t" style="left:676.5999999999999px;top:209.5px;letter-spacing:-0.506px;">Counter Rising</span>
<span class="t" style="left:676.5999999999999px;top:222.5px;letter-spacing:-0.445px;">Counter Rising With Directional</span>
<span class="t" style="left:676.5999999999999px;top:235.5px;letter-spacing:-0.532px;">Counter Falling</span>
<span class="t" style="left:676.5999999999999px;top:248.5px;letter-spacing:-0.459px;">Counter Falling With Directional</span>
<span class="t" style="left:676.5999999999999px;top:261.5px;letter-spacing:-0.511px;">AB Encoder 2X</span>
<span class="t" style="left:676.5999999999999px;top:274.5px;letter-spacing:-0.475px;">ABZ Encoder 2X</span>
<span class="t" style="left:676.5999999999999px;top:287.5px;letter-spacing:-0.511px;">AB Encoder 4X</span>
<span class="t" style="left:676.5999999999999px;top:300.5px;letter-spacing:-0.475px;">ABZ Encoder 4X</span>
<span class="t" style="left:676.5999999999999px;top:313.5px;letter-spacing:-0.547px;">Frequency 1000 ms.</span>
<span class="t" style="left:676.5999999999999px;top:326.5px;letter-spacing:-0.470px;">Period Rising Edge</span>
<span class="t" style="left:676.5999999999999px;top:339.5px;letter-spacing:-0.493px;">Period Falling Edge</span>
<span class="t" style="left:676.5999999999999px;top:352.5px;letter-spacing:-0.475px;">Periode Rising &amp; Falling Edge</span>
<span class="t" style="left:676.5999999999999px;top:365.5px;letter-spacing:-0.423px;">Interrupt Block Rising</span>
<span class="t" style="left:676.5999999999999px;top:378.5px;letter-spacing:-0.444px;">Interrupt Block Falling</span>
<span class="t" style="left:676.5999999999999px;top:391.5px;letter-spacing:-0.445px;">Interrupt Block Rising &amp; Falling</span>
<div class="bt" style="left:848px;top:602px;width:65px;height:21px;border:2px solid #0078d7;line-height:17px;"><span class="t" style="position:relative;top:1px;left:-1px;letter-spacing:-0.812px;">OK</span></div>
<div class="bt" style="left:938px;top:602px;width:65px;height:21px;line-height:19px;"><span class="t" style="position:relative;top:1px;left:-1px;letter-spacing:-0.635px;">Cancel</span></div>
</div>
</body></html>
